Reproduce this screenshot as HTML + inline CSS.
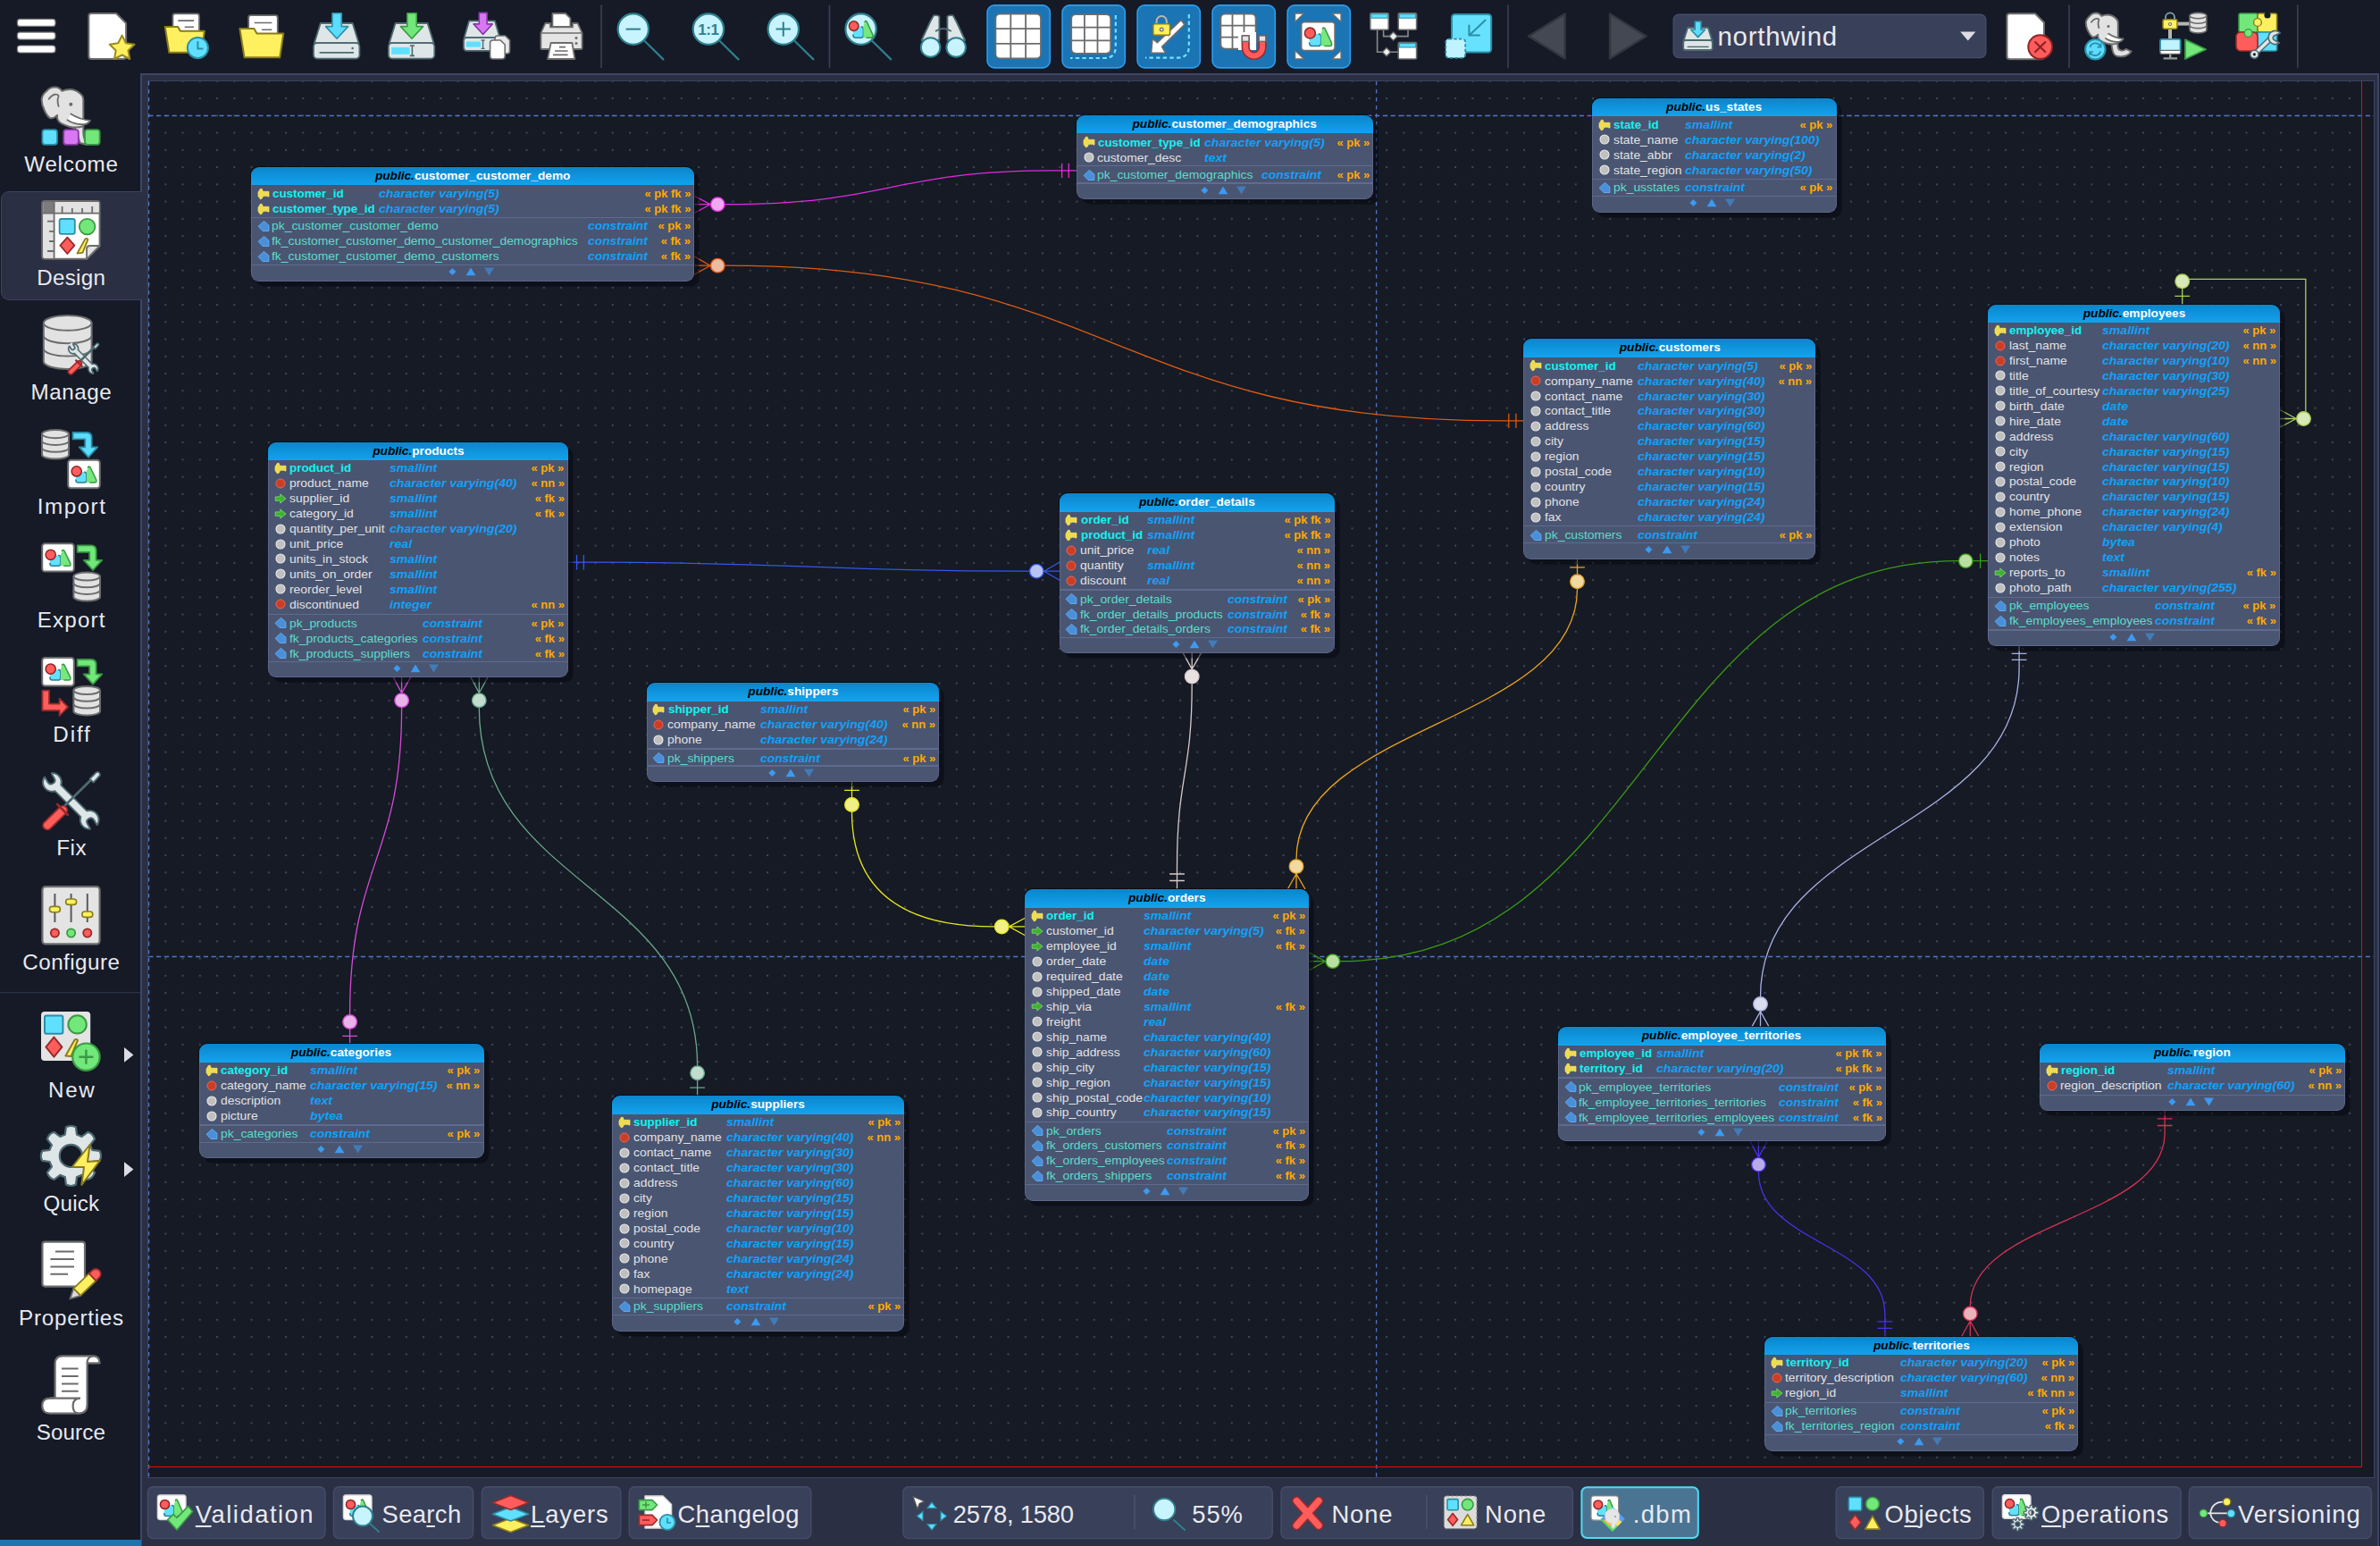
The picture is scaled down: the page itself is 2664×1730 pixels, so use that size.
<!DOCTYPE html>
<html><head><meta charset="utf-8"><title>pgModeler - northwind</title>
<style>
html,body{margin:0;padding:0}
body{width:2664px;height:1730px;overflow:hidden;background:#151a26;position:relative;font-family:"Liberation Sans",sans-serif}
#panel{position:absolute;left:157px;top:82px;width:2506px;height:1660px;background:#2a2f43;border:2px solid #3e4664;box-sizing:border-box}
#cvb{position:absolute;left:165px;top:89.6px;width:2493.2px;height:1564.4px;background:#3b4361}
#cv{position:absolute;left:166.3px;top:90.9px;width:2490.6px;height:1561.8px;background:#151a25;overflow:hidden}
#cvi{position:absolute;left:-166.3px;top:-90.9px;width:2664px;height:1730px}
#cvi svg.full{position:absolute;left:0;top:0}

.tb{position:absolute;border-radius:9px;box-shadow:5.5px 5.5px 0 rgba(8,10,16,.55);font-family:"Liberation Sans",sans-serif;white-space:nowrap}
.tt{position:absolute;left:0;top:0;right:0;height:21.2px;border-radius:9px 9px 0 0;box-shadow:0 -0.5px 0 0.6px rgba(6,8,14,.75);background:linear-gradient(#0b85cb,#13a4ef);color:#fff;font-weight:bold;font-size:12.4px;line-height:21px;text-align:center}
.tt span{display:inline-block;transform:scaleX(1.102)}
.tt i{color:#000}
.bd{position:absolute;left:0;right:0;background:#4a5572;border:1px solid #5b6789;border-top:none;border-radius:0 0 9px 9px;box-sizing:border-box}
.sp{position:absolute;left:0;right:0;height:1.3px;background:#5f6b8e}
.r{position:absolute;left:0;right:0;height:16.95px;line-height:16.95px;font-size:12.1px;color:#e2e2e2}
.r .ic{position:absolute;left:6.8px;top:1.5px;width:14px;height:14px}
.r .n{position:absolute;left:23.5px;top:.8px;transform:scaleX(1.148);transform-origin:0 50%}
.pkr .n{color:#0ff4f0;font-weight:bold;left:23.9px;transform:scaleX(1.107)}
.er .n{color:#5cdcca}
.r .t{position:absolute;top:.8px;color:#10a2fa;font-style:italic;font-weight:bold;transform:scaleX(1.165);transform-origin:0 50%}
.er .t{transform:scaleX(1.145)}
.r .g{position:absolute;right:4.2px;top:.8px;color:#ffaa00;font-weight:bold;transform:scaleX(1.074);transform-origin:100% 50%}
.fg{position:absolute}

#side{position:absolute;left:0;top:0}
.lb{position:absolute;white-space:nowrap;line-height:1.15;font-family:"Liberation Sans",sans-serif}
.lb u{text-decoration:underline;text-decoration-thickness:2px;text-underline-offset:3px}
#sel{position:absolute;left:.6px;top:213.7px;width:158.7px;height:122px;box-sizing:border-box;border:1.6px solid #3b4361;border-right:none;border-radius:9px 0 0 9px;background:#2a2f43}
#strip{position:absolute;left:0;top:1723.2px;width:158px;height:7px;background:#1b74b4}
</style></head><body>
<div id="panel"></div>
<div id="cvb"></div><div id="cv"><div id="cvi">
<svg class="full" width="2664" height="1730"><defs><pattern id="dp" x="165.05" y="89.85" width="19.25" height="19.25" patternUnits="userSpaceOnUse"><rect x="0" y="0" width="2" height="2" fill="#414657"/></pattern></defs>
<rect x="160" y="85" width="2483" height="1556" fill="url(#dp)"/>
<g stroke="#5473c6" stroke-width="1.3" fill="none" stroke-dasharray="5.2 3.6">
<path d="M166.2 129.5 H2657"/><path d="M166.2 1070.5 H2657"/></g>
<g stroke="#5473c6" stroke-width="1.3" fill="none" stroke-dasharray="4.5 4.5">
<path d="M166.6 91 V1653"/><path d="M1540.6 91 V1653"/></g>
<path d="M166.2 1641.5 H2643.5 V91" stroke="#ff0000" stroke-width="1.05" fill="none"/>
</svg>
<svg class="full" width="2664" height="1730"><g stroke="#e42ae4" fill="none" stroke-width="1.3" stroke-linecap="butt"><path d="M795.1 228.7 L777.5 219.5 M795.1 228.7 L777.5 228.7 M795.1 228.7 L777.5 238.2 M811.5 228.7 C996.0 228.7 996.0 190.9 1180.5 190.9 M1180.5 190.9 L1205.5 190.9 M1188.6 182.7 L1188.6 199.1 M1196.3 182.7 L1196.3 199.1"/><circle cx="803.3" cy="228.7" r="7.799999999999999" fill="#eeaaee" stroke-width="1.35"/></g>
<g stroke="#de5a12" fill="none" stroke-width="1.3" stroke-linecap="butt"><path d="M795.1 297.2 L777.5 287.1 M795.1 297.2 L777.5 297.2 M795.1 297.2 L777.5 307.0 M811.5 297.2 C1246.2 297.2 1246.2 470.9 1681.0 470.9 M1681.0 470.9 L1706.0 470.9 M1688.8 462.7 L1688.8 479.1 M1696.9 462.7 L1696.9 479.1"/><circle cx="803.3" cy="297.2" r="7.799999999999999" fill="#efb9a2" stroke-width="1.35"/></g>
<g stroke="#3358ee" fill="none" stroke-width="1.3" stroke-linecap="butt"><path d="M636.5 629.2 L661.5 629.2 M661.5 629.2 C906.8 629.2 906.8 639.2 1152.1 639.2 M645.6 621.0 L645.6 637.4 M653.4 621.0 L653.4 637.4 M1168.5 639.2 L1186.2 629.0 M1168.5 639.2 L1186.2 639.2 M1168.5 639.2 L1186.2 649.2"/><circle cx="1160.3" cy="639.2" r="7.799999999999999" fill="#b9c2f2" stroke-width="1.35"/></g>
<g stroke="#d84ad8" fill="none" stroke-width="1.3" stroke-linecap="butt"><path d="M449.6 775.5 L440.3 757.9 M449.6 775.5 L449.6 757.9 M449.6 775.5 L459.7 757.9 M449.6 791.9 C449.6 963.6 391.6 963.6 391.6 1135.3 M391.6 1151.7 L391.6 1168.4 M383.2 1159.3 L400.0 1159.3"/><circle cx="449.6" cy="783.7" r="7.799999999999999" fill="#e9b2e9" stroke-width="1.35"/><circle cx="391.6" cy="1143.5" r="7.799999999999999" fill="#e9b2e9" stroke-width="1.35"/></g>
<g stroke="#6aa98a" fill="none" stroke-width="1.3" stroke-linecap="butt"><path d="M536.3 775.5 L527.0 757.9 M536.3 775.5 L536.3 757.9 M536.3 775.5 L546.0 757.9 M536.3 791.9 C536.3 992.2 780.6 992.2 780.6 1192.5 M780.6 1208.9 L780.6 1226.0 M772.2 1217.1 L789.0 1217.1"/><circle cx="536.3" cy="783.7" r="7.799999999999999" fill="#c2ddd0" stroke-width="1.35"/><circle cx="780.6" cy="1200.7" r="7.799999999999999" fill="#c2ddd0" stroke-width="1.35"/></g>
<g stroke="#e6e620" fill="none" stroke-width="1.3" stroke-linecap="butt"><path d="M953.5 875.3 L953.5 892.2 M945.1 884.4 L961.9 884.4 M953.5 908.6 Q953.5 1036.9 1113.1 1036.9 M1129.5 1036.9 L1147.4 1027.2 M1129.5 1036.9 L1147.4 1036.9 M1129.5 1036.9 L1147.4 1046.8"/><circle cx="953.5" cy="900.4" r="7.799999999999999" fill="#f0f084" stroke-width="1.35"/><circle cx="1121.3" cy="1036.9" r="7.799999999999999" fill="#f0f084" stroke-width="1.35"/></g>
<g stroke="#d9caca" fill="none" stroke-width="1.3" stroke-linecap="butt"><path d="M1334.2 748.9 L1324.3 730.9 M1334.2 748.9 L1334.2 730.9 M1334.2 748.9 L1344.4 730.9 M1334.2 765.3 C1334.2 867.6 1317.5 867.6 1317.5 970.0 M1317.5 970.0 L1317.5 995.0 M1309.1 978.0 L1325.9 978.0 M1309.1 985.5 L1325.9 985.5"/><circle cx="1334.2" cy="757.1" r="7.799999999999999" fill="#e9e1e1" stroke-width="1.35"/></g>
<g stroke="#e8a220" fill="none" stroke-width="1.3" stroke-linecap="butt"><path d="M1765.5 625.5 L1765.5 642.6 M1757.1 634.9 L1773.9 634.9 M1765.5 659.0 C1765.5 810.2 1451.0 810.2 1451.0 961.4 M1451.0 977.8 L1441.3 995.0 M1451.0 977.8 L1451.0 995.0 M1451.0 977.8 L1461.0 995.0"/><circle cx="1765.5" cy="650.8" r="7.799999999999999" fill="#f1d9a2" stroke-width="1.35"/><circle cx="1451.0" cy="969.6" r="7.799999999999999" fill="#f1d9a2" stroke-width="1.35"/></g>
<g stroke="#3b9b12" fill="none" stroke-width="1.3" stroke-linecap="butt"><path d="M2225.6 627.7 L2208.5 627.7 M2216.6 619.5 L2216.6 635.9 M2192.1 627.7 C1846.0 627.7 1846.0 1075.7 1500.0 1075.7 M1483.6 1075.7 L1465.7 1066.1 M1483.6 1075.7 L1465.7 1075.7 M1483.6 1075.7 L1465.7 1085.5"/><circle cx="2200.3" cy="627.7" r="7.799999999999999" fill="#b9e0a2" stroke-width="1.35"/><circle cx="1491.8" cy="1075.7" r="7.799999999999999" fill="#b9e0a2" stroke-width="1.35"/></g>
<g stroke="#a9d052" fill="none" stroke-width="1.3" stroke-linecap="butt"><path d="M2442.7 323.0 L2442.7 341.3 M2434.3 331.3 L2451.1 331.3 M2450 312.3 L2580.8 312.3 L2580.8 460.5 M2570.3 468.5 L2552.3 458.8 M2570.3 468.5 L2552.3 468.5 M2570.3 468.5 L2552.3 478.0"/><circle cx="2442.7" cy="314.8" r="7.799999999999999" fill="#d9e8ba" stroke-width="1.35"/><circle cx="2578.5" cy="468.5" r="7.799999999999999" fill="#d9e8ba" stroke-width="1.35"/></g>
<g stroke="#aab2e2" fill="none" stroke-width="1.3" stroke-linecap="butt"><path d="M2260.1 722.6 L2260.1 747.6 M2260.1 747.6 C2260.1 931.5 1970.5 931.5 1970.5 1115.3 M2251.7 731.4 L2268.5 731.4 M2251.7 738.4 L2268.5 738.4 M1970.5 1131.7 L1960.8 1149.1 M1970.5 1131.7 L1970.5 1149.1 M1970.5 1131.7 L1980.2 1149.1"/><circle cx="1970.5" cy="1123.5" r="7.799999999999999" fill="#d9ddee" stroke-width="1.35"/></g>
<g stroke="#4a30e8" fill="none" stroke-width="1.3" stroke-linecap="butt"><path d="M1968.4 1295.1 L1959.0 1277.0 M1968.4 1295.1 L1968.4 1277.0 M1968.4 1295.1 L1978.1 1277.0 M1968.4 1311.5 C1968.4 1391.2 2109.9 1391.2 2109.9 1470.8 M2109.9 1470.8 L2109.9 1495.8 M2101.5 1478.8 L2118.3 1478.8 M2101.5 1486.4 L2118.3 1486.4"/><circle cx="1968.4" cy="1303.2" r="7.799999999999999" fill="#b9aaea" stroke-width="1.35"/></g>
<g stroke="#d83252" fill="none" stroke-width="1.3" stroke-linecap="butt"><path d="M2423.1 1242.7 L2423.1 1267.7 M2423.1 1267.7 C2423.1 1364.8 2205.3 1364.8 2205.3 1461.8 M2414.7 1251.9 L2431.5 1251.9 M2414.7 1259.5 L2431.5 1259.5 M2205.3 1478.2 L2195.5 1495.8 M2205.3 1478.2 L2205.3 1495.8 M2205.3 1478.2 L2215.0 1495.8"/><circle cx="2205.3" cy="1470.0" r="7.799999999999999" fill="#eab2ba" stroke-width="1.35"/></g></svg>
<div class="tb" style="left:280.95px;top:186.50px;width:496.40px;height:128.10px">
<div class="tt"><span><i>public.</i>customer_customer_demo</span></div>
<div class="bd" style="top:20.6px;height:107.50px"></div>
<div class="sp" style="top:56.32px"></div>
<div class="sp" style="top:109.40px"></div>
<div class="r pkr" style="top:21.60px"><svg class="ic" viewBox="0 0 14 14"><path d="M1 5.2 L3.4 1.3 L5.2 1.3 L6.3 4.3 L13 4.3 L13 10 L11.5 10 L10.7 8.7 L9.7 9.9 L8.7 8.7 L7.7 9.9 L6.5 8.9 L5.4 12 L3.4 12.9 L1 9.4 Z" fill="#eedb50" stroke="#fbeb66" stroke-width=".7" stroke-linejoin="round"/></svg><span class="n">customer_id</span><span class="t" style="left:143.3px">character varying(5)</span><span class="g">« pk fk »</span></div>
<div class="r pkr" style="top:38.56px"><svg class="ic" viewBox="0 0 14 14"><path d="M1 5.2 L3.4 1.3 L5.2 1.3 L6.3 4.3 L13 4.3 L13 10 L11.5 10 L10.7 8.7 L9.7 9.9 L8.7 8.7 L7.7 9.9 L6.5 8.9 L5.4 12 L3.4 12.9 L1 9.4 Z" fill="#eedb50" stroke="#fbeb66" stroke-width=".7" stroke-linejoin="round"/></svg><span class="n">customer_type_id</span><span class="t" style="left:143.3px">character varying(5)</span><span class="g">« pk fk »</span></div>
<div class="r er" style="top:57.92px"><svg class="ic" viewBox="0 0 14 14"><path d="M1.1 7.3 L7.4 1.4 L12.9 6.1 L12.9 12.5 L6 12.5 Z" fill="#4a90d8" stroke="#62b0ff" stroke-width=".9" stroke-linejoin="round"/></svg><span class="n">pk_customer_customer_demo</span><span class="t" style="left:377.0px">constraint</span><span class="g">« pk »</span></div>
<div class="r er" style="top:74.88px"><svg class="ic" viewBox="0 0 14 14"><path d="M1.1 7.3 L7.4 1.4 L12.9 6.1 L12.9 12.5 L6 12.5 Z" fill="#4a90d8" stroke="#62b0ff" stroke-width=".9" stroke-linejoin="round"/></svg><span class="n">fk_customer_customer_demo_customer_demographics</span><span class="t" style="left:377.0px">constraint</span><span class="g">« fk »</span></div>
<div class="r er" style="top:91.84px"><svg class="ic" viewBox="0 0 14 14"><path d="M1.1 7.3 L7.4 1.4 L12.9 6.1 L12.9 12.5 L6 12.5 Z" fill="#4a90d8" stroke="#62b0ff" stroke-width=".9" stroke-linejoin="round"/></svg><span class="n">fk_customer_customer_demo_customers</span><span class="t" style="left:377.0px">constraint</span><span class="g">« fk »</span></div>
<svg class="fg" style="left:213.60px;top:109.70px" width="64" height="16" viewBox="-32 -8 64 16"><path d="M-20.6 -4 L-16.6 0 L-20.6 4 L-24.6 0 Z" fill="#3c9af0"/><path d="M-5.4 4.2 L0 -4.6 L5.4 4.2 Z" fill="#3c9af0"/><path d="M15 -4.4 L26 -4.4 L20.5 4.4 Z" fill="#3c9af0" opacity=".55"/></svg>
</div>
<div class="tb" style="left:1204.95px;top:128.75px;width:332.40px;height:94.18px">
<div class="tt"><span><i>public.</i>customer_demographics</span></div>
<div class="bd" style="top:20.6px;height:73.58px"></div>
<div class="sp" style="top:56.32px"></div>
<div class="sp" style="top:75.48px"></div>
<div class="r pkr" style="top:22.20px"><svg class="ic" viewBox="0 0 14 14"><path d="M1 5.2 L3.4 1.3 L5.2 1.3 L6.3 4.3 L13 4.3 L13 10 L11.5 10 L10.7 8.7 L9.7 9.9 L8.7 8.7 L7.7 9.9 L6.5 8.9 L5.4 12 L3.4 12.9 L1 9.4 Z" fill="#eedb50" stroke="#fbeb66" stroke-width=".7" stroke-linejoin="round"/></svg><span class="n">customer_type_id</span><span class="t" style="left:143.2px">character varying(5)</span><span class="g">« pk »</span></div>
<div class="r" style="top:39.16px"><svg class="ic" viewBox="0 0 14 14"><circle cx="7" cy="7" r="5" fill="#c0c0c0" stroke="#ececec" stroke-width="1.1"/></svg><span class="n">customer_desc</span><span class="t" style="left:143.2px">text</span></div>
<div class="r er" style="top:58.42px"><svg class="ic" viewBox="0 0 14 14"><path d="M1.1 7.3 L7.4 1.4 L12.9 6.1 L12.9 12.5 L6 12.5 Z" fill="#4a90d8" stroke="#62b0ff" stroke-width=".9" stroke-linejoin="round"/></svg><span class="n">pk_customer_demographics</span><span class="t" style="left:206.9px">constraint</span><span class="g">« pk »</span></div>
<svg class="fg" style="left:131.60px;top:75.78px" width="64" height="16" viewBox="-32 -8 64 16"><path d="M-20.6 -4 L-16.6 0 L-20.6 4 L-24.6 0 Z" fill="#3c9af0"/><path d="M-5.4 4.2 L0 -4.6 L5.4 4.2 Z" fill="#3c9af0"/><path d="M15 -4.4 L26 -4.4 L20.5 4.4 Z" fill="#3c9af0" opacity=".55"/></svg>
</div>
<div class="tb" style="left:1782.45px;top:109.50px;width:273.20px;height:128.10px">
<div class="tt"><span><i>public.</i>us_states</span></div>
<div class="bd" style="top:20.6px;height:107.50px"></div>
<div class="sp" style="top:90.24px"></div>
<div class="sp" style="top:109.40px"></div>
<div class="r pkr" style="top:21.50px"><svg class="ic" viewBox="0 0 14 14"><path d="M1 5.2 L3.4 1.3 L5.2 1.3 L6.3 4.3 L13 4.3 L13 10 L11.5 10 L10.7 8.7 L9.7 9.9 L8.7 8.7 L7.7 9.9 L6.5 8.9 L5.4 12 L3.4 12.9 L1 9.4 Z" fill="#eedb50" stroke="#fbeb66" stroke-width=".7" stroke-linejoin="round"/></svg><span class="n">state_id</span><span class="t" style="left:103.7px">smallint</span><span class="g">« pk »</span></div>
<div class="r" style="top:38.46px"><svg class="ic" viewBox="0 0 14 14"><circle cx="7" cy="7" r="5" fill="#c0c0c0" stroke="#ececec" stroke-width="1.1"/></svg><span class="n">state_name</span><span class="t" style="left:103.7px">character varying(100)</span></div>
<div class="r" style="top:55.42px"><svg class="ic" viewBox="0 0 14 14"><circle cx="7" cy="7" r="5" fill="#c0c0c0" stroke="#ececec" stroke-width="1.1"/></svg><span class="n">state_abbr</span><span class="t" style="left:103.7px">character varying(2)</span></div>
<div class="r" style="top:72.38px"><svg class="ic" viewBox="0 0 14 14"><circle cx="7" cy="7" r="5" fill="#c0c0c0" stroke="#ececec" stroke-width="1.1"/></svg><span class="n">state_region</span><span class="t" style="left:103.7px">character varying(50)</span></div>
<div class="r er" style="top:92.14px"><svg class="ic" viewBox="0 0 14 14"><path d="M1.1 7.3 L7.4 1.4 L12.9 6.1 L12.9 12.5 L6 12.5 Z" fill="#4a90d8" stroke="#62b0ff" stroke-width=".9" stroke-linejoin="round"/></svg><span class="n">pk_usstates</span><span class="t" style="left:103.7px">constraint</span><span class="g">« pk »</span></div>
<svg class="fg" style="left:102.00px;top:109.70px" width="64" height="16" viewBox="-32 -8 64 16"><path d="M-20.6 -4 L-16.6 0 L-20.6 4 L-24.6 0 Z" fill="#3c9af0"/><path d="M-5.4 4.2 L0 -4.6 L5.4 4.2 Z" fill="#3c9af0"/><path d="M15 -4.4 L26 -4.4 L20.5 4.4 Z" fill="#3c9af0" opacity=".55"/></svg>
</div>
<div class="tb" style="left:2225.20px;top:340.50px;width:326.70px;height:382.50px">
<div class="tt"><span><i>public.</i>employees</span></div>
<div class="bd" style="top:20.6px;height:361.90px"></div>
<div class="sp" style="top:327.68px"></div>
<div class="sp" style="top:363.80px"></div>
<div class="r pkr" style="top:20.60px"><svg class="ic" viewBox="0 0 14 14"><path d="M1 5.2 L3.4 1.3 L5.2 1.3 L6.3 4.3 L13 4.3 L13 10 L11.5 10 L10.7 8.7 L9.7 9.9 L8.7 8.7 L7.7 9.9 L6.5 8.9 L5.4 12 L3.4 12.9 L1 9.4 Z" fill="#eedb50" stroke="#fbeb66" stroke-width=".7" stroke-linejoin="round"/></svg><span class="n">employee_id</span><span class="t" style="left:128.1px">smallint</span><span class="g">« pk »</span></div>
<div class="r" style="top:37.56px"><svg class="ic" viewBox="0 0 14 14"><circle cx="7" cy="7" r="5" fill="#cc3e24" stroke="#e8685a" stroke-width="1"/></svg><span class="n">last_name</span><span class="t" style="left:128.1px">character varying(20)</span><span class="g">« nn »</span></div>
<div class="r" style="top:54.52px"><svg class="ic" viewBox="0 0 14 14"><circle cx="7" cy="7" r="5" fill="#cc3e24" stroke="#e8685a" stroke-width="1"/></svg><span class="n">first_name</span><span class="t" style="left:128.1px">character varying(10)</span><span class="g">« nn »</span></div>
<div class="r" style="top:71.48px"><svg class="ic" viewBox="0 0 14 14"><circle cx="7" cy="7" r="5" fill="#c0c0c0" stroke="#ececec" stroke-width="1.1"/></svg><span class="n">title</span><span class="t" style="left:128.1px">character varying(30)</span></div>
<div class="r" style="top:88.44px"><svg class="ic" viewBox="0 0 14 14"><circle cx="7" cy="7" r="5" fill="#c0c0c0" stroke="#ececec" stroke-width="1.1"/></svg><span class="n">title_of_courtesy</span><span class="t" style="left:128.1px">character varying(25)</span></div>
<div class="r" style="top:105.40px"><svg class="ic" viewBox="0 0 14 14"><circle cx="7" cy="7" r="5" fill="#c0c0c0" stroke="#ececec" stroke-width="1.1"/></svg><span class="n">birth_date</span><span class="t" style="left:128.1px">date</span></div>
<div class="r" style="top:122.36px"><svg class="ic" viewBox="0 0 14 14"><circle cx="7" cy="7" r="5" fill="#c0c0c0" stroke="#ececec" stroke-width="1.1"/></svg><span class="n">hire_date</span><span class="t" style="left:128.1px">date</span></div>
<div class="r" style="top:139.32px"><svg class="ic" viewBox="0 0 14 14"><circle cx="7" cy="7" r="5" fill="#c0c0c0" stroke="#ececec" stroke-width="1.1"/></svg><span class="n">address</span><span class="t" style="left:128.1px">character varying(60)</span></div>
<div class="r" style="top:156.28px"><svg class="ic" viewBox="0 0 14 14"><circle cx="7" cy="7" r="5" fill="#c0c0c0" stroke="#ececec" stroke-width="1.1"/></svg><span class="n">city</span><span class="t" style="left:128.1px">character varying(15)</span></div>
<div class="r" style="top:173.24px"><svg class="ic" viewBox="0 0 14 14"><circle cx="7" cy="7" r="5" fill="#c0c0c0" stroke="#ececec" stroke-width="1.1"/></svg><span class="n">region</span><span class="t" style="left:128.1px">character varying(15)</span></div>
<div class="r" style="top:190.20px"><svg class="ic" viewBox="0 0 14 14"><circle cx="7" cy="7" r="5" fill="#c0c0c0" stroke="#ececec" stroke-width="1.1"/></svg><span class="n">postal_code</span><span class="t" style="left:128.1px">character varying(10)</span></div>
<div class="r" style="top:207.16px"><svg class="ic" viewBox="0 0 14 14"><circle cx="7" cy="7" r="5" fill="#c0c0c0" stroke="#ececec" stroke-width="1.1"/></svg><span class="n">country</span><span class="t" style="left:128.1px">character varying(15)</span></div>
<div class="r" style="top:224.12px"><svg class="ic" viewBox="0 0 14 14"><circle cx="7" cy="7" r="5" fill="#c0c0c0" stroke="#ececec" stroke-width="1.1"/></svg><span class="n">home_phone</span><span class="t" style="left:128.1px">character varying(24)</span></div>
<div class="r" style="top:241.08px"><svg class="ic" viewBox="0 0 14 14"><circle cx="7" cy="7" r="5" fill="#c0c0c0" stroke="#ececec" stroke-width="1.1"/></svg><span class="n">extension</span><span class="t" style="left:128.1px">character varying(4)</span></div>
<div class="r" style="top:258.04px"><svg class="ic" viewBox="0 0 14 14"><circle cx="7" cy="7" r="5" fill="#c0c0c0" stroke="#ececec" stroke-width="1.1"/></svg><span class="n">photo</span><span class="t" style="left:128.1px">bytea</span></div>
<div class="r" style="top:275.00px"><svg class="ic" viewBox="0 0 14 14"><circle cx="7" cy="7" r="5" fill="#c0c0c0" stroke="#ececec" stroke-width="1.1"/></svg><span class="n">notes</span><span class="t" style="left:128.1px">text</span></div>
<div class="r" style="top:291.96px"><svg class="ic" viewBox="0 0 14 14"><path d="M1.2 4.9 L6.8 4.9 L6.8 1.9 L13 7 L6.8 12.1 L6.8 9.3 L1.2 9.3 Z" fill="#40b030" stroke="#7fe070" stroke-width=".8" stroke-linejoin="round"/></svg><span class="n">reports_to</span><span class="t" style="left:128.1px">smallint</span><span class="g">« fk »</span></div>
<div class="r" style="top:308.92px"><svg class="ic" viewBox="0 0 14 14"><circle cx="7" cy="7" r="5" fill="#c0c0c0" stroke="#ececec" stroke-width="1.1"/></svg><span class="n">photo_path</span><span class="t" style="left:128.1px">character varying(255)</span></div>
<div class="r er" style="top:328.78px"><svg class="ic" viewBox="0 0 14 14"><path d="M1.1 7.3 L7.4 1.4 L12.9 6.1 L12.9 12.5 L6 12.5 Z" fill="#4a90d8" stroke="#62b0ff" stroke-width=".9" stroke-linejoin="round"/></svg><span class="n">pk_employees</span><span class="t" style="left:187.3px">constraint</span><span class="g">« pk »</span></div>
<div class="r er" style="top:345.74px"><svg class="ic" viewBox="0 0 14 14"><path d="M1.1 7.3 L7.4 1.4 L12.9 6.1 L12.9 12.5 L6 12.5 Z" fill="#4a90d8" stroke="#62b0ff" stroke-width=".9" stroke-linejoin="round"/></svg><span class="n">fk_employees_employees</span><span class="t" style="left:187.3px">constraint</span><span class="g">« fk »</span></div>
<svg class="fg" style="left:128.75px;top:364.10px" width="64" height="16" viewBox="-32 -8 64 16"><path d="M-20.6 -4 L-16.6 0 L-20.6 4 L-24.6 0 Z" fill="#3c9af0"/><path d="M-5.4 4.2 L0 -4.6 L5.4 4.2 Z" fill="#3c9af0"/><path d="M15 -4.4 L26 -4.4 L20.5 4.4 Z" fill="#3c9af0" opacity=".55"/></svg>
</div>
<div class="tb" style="left:1705.45px;top:379.00px;width:327.00px;height:246.82px">
<div class="tt"><span><i>public.</i>customers</span></div>
<div class="bd" style="top:20.6px;height:226.22px"></div>
<div class="sp" style="top:208.96px"></div>
<div class="sp" style="top:228.12px"></div>
<div class="r pkr" style="top:21.80px"><svg class="ic" viewBox="0 0 14 14"><path d="M1 5.2 L3.4 1.3 L5.2 1.3 L6.3 4.3 L13 4.3 L13 10 L11.5 10 L10.7 8.7 L9.7 9.9 L8.7 8.7 L7.7 9.9 L6.5 8.9 L5.4 12 L3.4 12.9 L1 9.4 Z" fill="#eedb50" stroke="#fbeb66" stroke-width=".7" stroke-linejoin="round"/></svg><span class="n">customer_id</span><span class="t" style="left:127.7px">character varying(5)</span><span class="g">« pk »</span></div>
<div class="r" style="top:38.76px"><svg class="ic" viewBox="0 0 14 14"><circle cx="7" cy="7" r="5" fill="#cc3e24" stroke="#e8685a" stroke-width="1"/></svg><span class="n">company_name</span><span class="t" style="left:127.7px">character varying(40)</span><span class="g">« nn »</span></div>
<div class="r" style="top:55.72px"><svg class="ic" viewBox="0 0 14 14"><circle cx="7" cy="7" r="5" fill="#c0c0c0" stroke="#ececec" stroke-width="1.1"/></svg><span class="n">contact_name</span><span class="t" style="left:127.7px">character varying(30)</span></div>
<div class="r" style="top:72.68px"><svg class="ic" viewBox="0 0 14 14"><circle cx="7" cy="7" r="5" fill="#c0c0c0" stroke="#ececec" stroke-width="1.1"/></svg><span class="n">contact_title</span><span class="t" style="left:127.7px">character varying(30)</span></div>
<div class="r" style="top:89.64px"><svg class="ic" viewBox="0 0 14 14"><circle cx="7" cy="7" r="5" fill="#c0c0c0" stroke="#ececec" stroke-width="1.1"/></svg><span class="n">address</span><span class="t" style="left:127.7px">character varying(60)</span></div>
<div class="r" style="top:106.60px"><svg class="ic" viewBox="0 0 14 14"><circle cx="7" cy="7" r="5" fill="#c0c0c0" stroke="#ececec" stroke-width="1.1"/></svg><span class="n">city</span><span class="t" style="left:127.7px">character varying(15)</span></div>
<div class="r" style="top:123.56px"><svg class="ic" viewBox="0 0 14 14"><circle cx="7" cy="7" r="5" fill="#c0c0c0" stroke="#ececec" stroke-width="1.1"/></svg><span class="n">region</span><span class="t" style="left:127.7px">character varying(15)</span></div>
<div class="r" style="top:140.52px"><svg class="ic" viewBox="0 0 14 14"><circle cx="7" cy="7" r="5" fill="#c0c0c0" stroke="#ececec" stroke-width="1.1"/></svg><span class="n">postal_code</span><span class="t" style="left:127.7px">character varying(10)</span></div>
<div class="r" style="top:157.48px"><svg class="ic" viewBox="0 0 14 14"><circle cx="7" cy="7" r="5" fill="#c0c0c0" stroke="#ececec" stroke-width="1.1"/></svg><span class="n">country</span><span class="t" style="left:127.7px">character varying(15)</span></div>
<div class="r" style="top:174.44px"><svg class="ic" viewBox="0 0 14 14"><circle cx="7" cy="7" r="5" fill="#c0c0c0" stroke="#ececec" stroke-width="1.1"/></svg><span class="n">phone</span><span class="t" style="left:127.7px">character varying(24)</span></div>
<div class="r" style="top:191.40px"><svg class="ic" viewBox="0 0 14 14"><circle cx="7" cy="7" r="5" fill="#c0c0c0" stroke="#ececec" stroke-width="1.1"/></svg><span class="n">fax</span><span class="t" style="left:127.7px">character varying(24)</span></div>
<div class="r er" style="top:211.16px"><svg class="ic" viewBox="0 0 14 14"><path d="M1.1 7.3 L7.4 1.4 L12.9 6.1 L12.9 12.5 L6 12.5 Z" fill="#4a90d8" stroke="#62b0ff" stroke-width=".9" stroke-linejoin="round"/></svg><span class="n">pk_customers</span><span class="t" style="left:127.7px">constraint</span><span class="g">« pk »</span></div>
<svg class="fg" style="left:128.90px;top:228.42px" width="64" height="16" viewBox="-32 -8 64 16"><path d="M-20.6 -4 L-16.6 0 L-20.6 4 L-24.6 0 Z" fill="#3c9af0"/><path d="M-5.4 4.2 L0 -4.6 L5.4 4.2 Z" fill="#3c9af0"/><path d="M15 -4.4 L26 -4.4 L20.5 4.4 Z" fill="#3c9af0" opacity=".55"/></svg>
</div>
<div class="tb" style="left:300.20px;top:494.50px;width:335.70px;height:263.78px">
<div class="tt"><span><i>public.</i>products</span></div>
<div class="bd" style="top:20.6px;height:243.18px"></div>
<div class="sp" style="top:192.00px"></div>
<div class="sp" style="top:245.08px"></div>
<div class="r pkr" style="top:20.70px"><svg class="ic" viewBox="0 0 14 14"><path d="M1 5.2 L3.4 1.3 L5.2 1.3 L6.3 4.3 L13 4.3 L13 10 L11.5 10 L10.7 8.7 L9.7 9.9 L8.7 8.7 L7.7 9.9 L6.5 8.9 L5.4 12 L3.4 12.9 L1 9.4 Z" fill="#eedb50" stroke="#fbeb66" stroke-width=".7" stroke-linejoin="round"/></svg><span class="n">product_id</span><span class="t" style="left:136.0px">smallint</span><span class="g">« pk »</span></div>
<div class="r" style="top:37.66px"><svg class="ic" viewBox="0 0 14 14"><circle cx="7" cy="7" r="5" fill="#cc3e24" stroke="#e8685a" stroke-width="1"/></svg><span class="n">product_name</span><span class="t" style="left:136.0px">character varying(40)</span><span class="g">« nn »</span></div>
<div class="r" style="top:54.62px"><svg class="ic" viewBox="0 0 14 14"><path d="M1.2 4.9 L6.8 4.9 L6.8 1.9 L13 7 L6.8 12.1 L6.8 9.3 L1.2 9.3 Z" fill="#40b030" stroke="#7fe070" stroke-width=".8" stroke-linejoin="round"/></svg><span class="n">supplier_id</span><span class="t" style="left:136.0px">smallint</span><span class="g">« fk »</span></div>
<div class="r" style="top:71.58px"><svg class="ic" viewBox="0 0 14 14"><path d="M1.2 4.9 L6.8 4.9 L6.8 1.9 L13 7 L6.8 12.1 L6.8 9.3 L1.2 9.3 Z" fill="#40b030" stroke="#7fe070" stroke-width=".8" stroke-linejoin="round"/></svg><span class="n">category_id</span><span class="t" style="left:136.0px">smallint</span><span class="g">« fk »</span></div>
<div class="r" style="top:88.54px"><svg class="ic" viewBox="0 0 14 14"><circle cx="7" cy="7" r="5" fill="#c0c0c0" stroke="#ececec" stroke-width="1.1"/></svg><span class="n">quantity_per_unit</span><span class="t" style="left:136.0px">character varying(20)</span></div>
<div class="r" style="top:105.50px"><svg class="ic" viewBox="0 0 14 14"><circle cx="7" cy="7" r="5" fill="#c0c0c0" stroke="#ececec" stroke-width="1.1"/></svg><span class="n">unit_price</span><span class="t" style="left:136.0px">real</span></div>
<div class="r" style="top:122.46px"><svg class="ic" viewBox="0 0 14 14"><circle cx="7" cy="7" r="5" fill="#c0c0c0" stroke="#ececec" stroke-width="1.1"/></svg><span class="n">units_in_stock</span><span class="t" style="left:136.0px">smallint</span></div>
<div class="r" style="top:139.42px"><svg class="ic" viewBox="0 0 14 14"><circle cx="7" cy="7" r="5" fill="#c0c0c0" stroke="#ececec" stroke-width="1.1"/></svg><span class="n">units_on_order</span><span class="t" style="left:136.0px">smallint</span></div>
<div class="r" style="top:156.38px"><svg class="ic" viewBox="0 0 14 14"><circle cx="7" cy="7" r="5" fill="#c0c0c0" stroke="#ececec" stroke-width="1.1"/></svg><span class="n">reorder_level</span><span class="t" style="left:136.0px">smallint</span></div>
<div class="r" style="top:173.34px"><svg class="ic" viewBox="0 0 14 14"><circle cx="7" cy="7" r="5" fill="#cc3e24" stroke="#e8685a" stroke-width="1"/></svg><span class="n">discontinued</span><span class="t" style="left:136.0px">integer</span><span class="g">« nn »</span></div>
<div class="r er" style="top:194.40px"><svg class="ic" viewBox="0 0 14 14"><path d="M1.1 7.3 L7.4 1.4 L12.9 6.1 L12.9 12.5 L6 12.5 Z" fill="#4a90d8" stroke="#62b0ff" stroke-width=".9" stroke-linejoin="round"/></svg><span class="n">pk_products</span><span class="t" style="left:172.7px">constraint</span><span class="g">« pk »</span></div>
<div class="r er" style="top:211.36px"><svg class="ic" viewBox="0 0 14 14"><path d="M1.1 7.3 L7.4 1.4 L12.9 6.1 L12.9 12.5 L6 12.5 Z" fill="#4a90d8" stroke="#62b0ff" stroke-width=".9" stroke-linejoin="round"/></svg><span class="n">fk_products_categories</span><span class="t" style="left:172.7px">constraint</span><span class="g">« fk »</span></div>
<div class="r er" style="top:228.32px"><svg class="ic" viewBox="0 0 14 14"><path d="M1.1 7.3 L7.4 1.4 L12.9 6.1 L12.9 12.5 L6 12.5 Z" fill="#4a90d8" stroke="#62b0ff" stroke-width=".9" stroke-linejoin="round"/></svg><span class="n">fk_products_suppliers</span><span class="t" style="left:172.7px">constraint</span><span class="g">« fk »</span></div>
<svg class="fg" style="left:133.25px;top:245.38px" width="64" height="16" viewBox="-32 -8 64 16"><path d="M-20.6 -4 L-16.6 0 L-20.6 4 L-24.6 0 Z" fill="#3c9af0"/><path d="M-5.4 4.2 L0 -4.6 L5.4 4.2 Z" fill="#3c9af0"/><path d="M15 -4.4 L26 -4.4 L20.5 4.4 Z" fill="#3c9af0" opacity=".55"/></svg>
</div>
<div class="tb" style="left:1185.70px;top:552.25px;width:307.90px;height:178.98px">
<div class="tt"><span><i>public.</i>order_details</span></div>
<div class="bd" style="top:20.6px;height:158.38px"></div>
<div class="sp" style="top:107.20px"></div>
<div class="sp" style="top:160.28px"></div>
<div class="r pkr" style="top:21.20px"><svg class="ic" viewBox="0 0 14 14"><path d="M1 5.2 L3.4 1.3 L5.2 1.3 L6.3 4.3 L13 4.3 L13 10 L11.5 10 L10.7 8.7 L9.7 9.9 L8.7 8.7 L7.7 9.9 L6.5 8.9 L5.4 12 L3.4 12.9 L1 9.4 Z" fill="#eedb50" stroke="#fbeb66" stroke-width=".7" stroke-linejoin="round"/></svg><span class="n">order_id</span><span class="t" style="left:98.2px">smallint</span><span class="g">« pk fk »</span></div>
<div class="r pkr" style="top:38.16px"><svg class="ic" viewBox="0 0 14 14"><path d="M1 5.2 L3.4 1.3 L5.2 1.3 L6.3 4.3 L13 4.3 L13 10 L11.5 10 L10.7 8.7 L9.7 9.9 L8.7 8.7 L7.7 9.9 L6.5 8.9 L5.4 12 L3.4 12.9 L1 9.4 Z" fill="#eedb50" stroke="#fbeb66" stroke-width=".7" stroke-linejoin="round"/></svg><span class="n">product_id</span><span class="t" style="left:98.2px">smallint</span><span class="g">« pk fk »</span></div>
<div class="r" style="top:55.12px"><svg class="ic" viewBox="0 0 14 14"><circle cx="7" cy="7" r="5" fill="#cc3e24" stroke="#e8685a" stroke-width="1"/></svg><span class="n">unit_price</span><span class="t" style="left:98.2px">real</span><span class="g">« nn »</span></div>
<div class="r" style="top:72.08px"><svg class="ic" viewBox="0 0 14 14"><circle cx="7" cy="7" r="5" fill="#cc3e24" stroke="#e8685a" stroke-width="1"/></svg><span class="n">quantity</span><span class="t" style="left:98.2px">smallint</span><span class="g">« nn »</span></div>
<div class="r" style="top:89.04px"><svg class="ic" viewBox="0 0 14 14"><circle cx="7" cy="7" r="5" fill="#cc3e24" stroke="#e8685a" stroke-width="1"/></svg><span class="n">discount</span><span class="t" style="left:98.2px">real</span><span class="g">« nn »</span></div>
<div class="r er" style="top:109.50px"><svg class="ic" viewBox="0 0 14 14"><path d="M1.1 7.3 L7.4 1.4 L12.9 6.1 L12.9 12.5 L6 12.5 Z" fill="#4a90d8" stroke="#62b0ff" stroke-width=".9" stroke-linejoin="round"/></svg><span class="n">pk_order_details</span><span class="t" style="left:188.3px">constraint</span><span class="g">« pk »</span></div>
<div class="r er" style="top:126.46px"><svg class="ic" viewBox="0 0 14 14"><path d="M1.1 7.3 L7.4 1.4 L12.9 6.1 L12.9 12.5 L6 12.5 Z" fill="#4a90d8" stroke="#62b0ff" stroke-width=".9" stroke-linejoin="round"/></svg><span class="n">fk_order_details_products</span><span class="t" style="left:188.3px">constraint</span><span class="g">« fk »</span></div>
<div class="r er" style="top:143.42px"><svg class="ic" viewBox="0 0 14 14"><path d="M1.1 7.3 L7.4 1.4 L12.9 6.1 L12.9 12.5 L6 12.5 Z" fill="#4a90d8" stroke="#62b0ff" stroke-width=".9" stroke-linejoin="round"/></svg><span class="n">fk_order_details_orders</span><span class="t" style="left:188.3px">constraint</span><span class="g">« fk »</span></div>
<svg class="fg" style="left:119.35px;top:160.58px" width="64" height="16" viewBox="-32 -8 64 16"><path d="M-20.6 -4 L-16.6 0 L-20.6 4 L-24.6 0 Z" fill="#3c9af0"/><path d="M-5.4 4.2 L0 -4.6 L5.4 4.2 Z" fill="#3c9af0"/><path d="M15 -4.4 L26 -4.4 L20.5 4.4 Z" fill="#3c9af0" opacity=".55"/></svg>
</div>
<div class="tb" style="left:723.70px;top:764.00px;width:327.30px;height:111.14px">
<div class="tt"><span><i>public.</i>shippers</span></div>
<div class="bd" style="top:20.6px;height:90.54px"></div>
<div class="sp" style="top:73.28px"></div>
<div class="sp" style="top:92.44px"></div>
<div class="r pkr" style="top:21.70px"><svg class="ic" viewBox="0 0 14 14"><path d="M1 5.2 L3.4 1.3 L5.2 1.3 L6.3 4.3 L13 4.3 L13 10 L11.5 10 L10.7 8.7 L9.7 9.9 L8.7 8.7 L7.7 9.9 L6.5 8.9 L5.4 12 L3.4 12.9 L1 9.4 Z" fill="#eedb50" stroke="#fbeb66" stroke-width=".7" stroke-linejoin="round"/></svg><span class="n">shipper_id</span><span class="t" style="left:127.7px">smallint</span><span class="g">« pk »</span></div>
<div class="r" style="top:38.66px"><svg class="ic" viewBox="0 0 14 14"><circle cx="7" cy="7" r="5" fill="#cc3e24" stroke="#e8685a" stroke-width="1"/></svg><span class="n">company_name</span><span class="t" style="left:127.7px">character varying(40)</span><span class="g">« nn »</span></div>
<div class="r" style="top:55.62px"><svg class="ic" viewBox="0 0 14 14"><circle cx="7" cy="7" r="5" fill="#c0c0c0" stroke="#ececec" stroke-width="1.1"/></svg><span class="n">phone</span><span class="t" style="left:127.7px">character varying(24)</span></div>
<div class="r er" style="top:75.88px"><svg class="ic" viewBox="0 0 14 14"><path d="M1.1 7.3 L7.4 1.4 L12.9 6.1 L12.9 12.5 L6 12.5 Z" fill="#4a90d8" stroke="#62b0ff" stroke-width=".9" stroke-linejoin="round"/></svg><span class="n">pk_shippers</span><span class="t" style="left:127.7px">constraint</span><span class="g">« pk »</span></div>
<svg class="fg" style="left:129.05px;top:92.74px" width="64" height="16" viewBox="-32 -8 64 16"><path d="M-20.6 -4 L-16.6 0 L-20.6 4 L-24.6 0 Z" fill="#3c9af0"/><path d="M-5.4 4.2 L0 -4.6 L5.4 4.2 Z" fill="#3c9af0"/><path d="M15 -4.4 L26 -4.4 L20.5 4.4 Z" fill="#3c9af0" opacity=".55"/></svg>
</div>
<div class="tb" style="left:1147.20px;top:995.00px;width:318.30px;height:348.58px">
<div class="tt"><span><i>public.</i>orders</span></div>
<div class="bd" style="top:20.6px;height:327.98px"></div>
<div class="sp" style="top:259.84px"></div>
<div class="sp" style="top:329.88px"></div>
<div class="r pkr" style="top:21.20px"><svg class="ic" viewBox="0 0 14 14"><path d="M1 5.2 L3.4 1.3 L5.2 1.3 L6.3 4.3 L13 4.3 L13 10 L11.5 10 L10.7 8.7 L9.7 9.9 L8.7 8.7 L7.7 9.9 L6.5 8.9 L5.4 12 L3.4 12.9 L1 9.4 Z" fill="#eedb50" stroke="#fbeb66" stroke-width=".7" stroke-linejoin="round"/></svg><span class="n">order_id</span><span class="t" style="left:133.0px">smallint</span><span class="g">« pk »</span></div>
<div class="r" style="top:38.16px"><svg class="ic" viewBox="0 0 14 14"><path d="M1.2 4.9 L6.8 4.9 L6.8 1.9 L13 7 L6.8 12.1 L6.8 9.3 L1.2 9.3 Z" fill="#40b030" stroke="#7fe070" stroke-width=".8" stroke-linejoin="round"/></svg><span class="n">customer_id</span><span class="t" style="left:133.0px">character varying(5)</span><span class="g">« fk »</span></div>
<div class="r" style="top:55.12px"><svg class="ic" viewBox="0 0 14 14"><path d="M1.2 4.9 L6.8 4.9 L6.8 1.9 L13 7 L6.8 12.1 L6.8 9.3 L1.2 9.3 Z" fill="#40b030" stroke="#7fe070" stroke-width=".8" stroke-linejoin="round"/></svg><span class="n">employee_id</span><span class="t" style="left:133.0px">smallint</span><span class="g">« fk »</span></div>
<div class="r" style="top:72.08px"><svg class="ic" viewBox="0 0 14 14"><circle cx="7" cy="7" r="5" fill="#c0c0c0" stroke="#ececec" stroke-width="1.1"/></svg><span class="n">order_date</span><span class="t" style="left:133.0px">date</span></div>
<div class="r" style="top:89.04px"><svg class="ic" viewBox="0 0 14 14"><circle cx="7" cy="7" r="5" fill="#c0c0c0" stroke="#ececec" stroke-width="1.1"/></svg><span class="n">required_date</span><span class="t" style="left:133.0px">date</span></div>
<div class="r" style="top:106.00px"><svg class="ic" viewBox="0 0 14 14"><circle cx="7" cy="7" r="5" fill="#c0c0c0" stroke="#ececec" stroke-width="1.1"/></svg><span class="n">shipped_date</span><span class="t" style="left:133.0px">date</span></div>
<div class="r" style="top:122.96px"><svg class="ic" viewBox="0 0 14 14"><path d="M1.2 4.9 L6.8 4.9 L6.8 1.9 L13 7 L6.8 12.1 L6.8 9.3 L1.2 9.3 Z" fill="#40b030" stroke="#7fe070" stroke-width=".8" stroke-linejoin="round"/></svg><span class="n">ship_via</span><span class="t" style="left:133.0px">smallint</span><span class="g">« fk »</span></div>
<div class="r" style="top:139.92px"><svg class="ic" viewBox="0 0 14 14"><circle cx="7" cy="7" r="5" fill="#c0c0c0" stroke="#ececec" stroke-width="1.1"/></svg><span class="n">freight</span><span class="t" style="left:133.0px">real</span></div>
<div class="r" style="top:156.88px"><svg class="ic" viewBox="0 0 14 14"><circle cx="7" cy="7" r="5" fill="#c0c0c0" stroke="#ececec" stroke-width="1.1"/></svg><span class="n">ship_name</span><span class="t" style="left:133.0px">character varying(40)</span></div>
<div class="r" style="top:173.84px"><svg class="ic" viewBox="0 0 14 14"><circle cx="7" cy="7" r="5" fill="#c0c0c0" stroke="#ececec" stroke-width="1.1"/></svg><span class="n">ship_address</span><span class="t" style="left:133.0px">character varying(60)</span></div>
<div class="r" style="top:190.80px"><svg class="ic" viewBox="0 0 14 14"><circle cx="7" cy="7" r="5" fill="#c0c0c0" stroke="#ececec" stroke-width="1.1"/></svg><span class="n">ship_city</span><span class="t" style="left:133.0px">character varying(15)</span></div>
<div class="r" style="top:207.76px"><svg class="ic" viewBox="0 0 14 14"><circle cx="7" cy="7" r="5" fill="#c0c0c0" stroke="#ececec" stroke-width="1.1"/></svg><span class="n">ship_region</span><span class="t" style="left:133.0px">character varying(15)</span></div>
<div class="r" style="top:224.72px"><svg class="ic" viewBox="0 0 14 14"><circle cx="7" cy="7" r="5" fill="#c0c0c0" stroke="#ececec" stroke-width="1.1"/></svg><span class="n">ship_postal_code</span><span class="t" style="left:133.0px">character varying(10)</span></div>
<div class="r" style="top:241.68px"><svg class="ic" viewBox="0 0 14 14"><circle cx="7" cy="7" r="5" fill="#c0c0c0" stroke="#ececec" stroke-width="1.1"/></svg><span class="n">ship_country</span><span class="t" style="left:133.0px">character varying(15)</span></div>
<div class="r er" style="top:261.74px"><svg class="ic" viewBox="0 0 14 14"><path d="M1.1 7.3 L7.4 1.4 L12.9 6.1 L12.9 12.5 L6 12.5 Z" fill="#4a90d8" stroke="#62b0ff" stroke-width=".9" stroke-linejoin="round"/></svg><span class="n">pk_orders</span><span class="t" style="left:159.1px">constraint</span><span class="g">« pk »</span></div>
<div class="r er" style="top:278.70px"><svg class="ic" viewBox="0 0 14 14"><path d="M1.1 7.3 L7.4 1.4 L12.9 6.1 L12.9 12.5 L6 12.5 Z" fill="#4a90d8" stroke="#62b0ff" stroke-width=".9" stroke-linejoin="round"/></svg><span class="n">fk_orders_customers</span><span class="t" style="left:159.1px">constraint</span><span class="g">« fk »</span></div>
<div class="r er" style="top:295.66px"><svg class="ic" viewBox="0 0 14 14"><path d="M1.1 7.3 L7.4 1.4 L12.9 6.1 L12.9 12.5 L6 12.5 Z" fill="#4a90d8" stroke="#62b0ff" stroke-width=".9" stroke-linejoin="round"/></svg><span class="n">fk_orders_employees</span><span class="t" style="left:159.1px">constraint</span><span class="g">« fk »</span></div>
<div class="r er" style="top:312.62px"><svg class="ic" viewBox="0 0 14 14"><path d="M1.1 7.3 L7.4 1.4 L12.9 6.1 L12.9 12.5 L6 12.5 Z" fill="#4a90d8" stroke="#62b0ff" stroke-width=".9" stroke-linejoin="round"/></svg><span class="n">fk_orders_shippers</span><span class="t" style="left:159.1px">constraint</span><span class="g">« fk »</span></div>
<svg class="fg" style="left:124.55px;top:330.18px" width="64" height="16" viewBox="-32 -8 64 16"><path d="M-20.6 -4 L-16.6 0 L-20.6 4 L-24.6 0 Z" fill="#3c9af0"/><path d="M-5.4 4.2 L0 -4.6 L5.4 4.2 Z" fill="#3c9af0"/><path d="M15 -4.4 L26 -4.4 L20.5 4.4 Z" fill="#3c9af0" opacity=".55"/></svg>
</div>
<div class="tb" style="left:223.20px;top:1168.25px;width:318.40px;height:128.10px">
<div class="tt"><span><i>public.</i>categories</span></div>
<div class="bd" style="top:20.6px;height:107.50px"></div>
<div class="sp" style="top:90.24px"></div>
<div class="sp" style="top:109.40px"></div>
<div class="r pkr" style="top:21.00px"><svg class="ic" viewBox="0 0 14 14"><path d="M1 5.2 L3.4 1.3 L5.2 1.3 L6.3 4.3 L13 4.3 L13 10 L11.5 10 L10.7 8.7 L9.7 9.9 L8.7 8.7 L7.7 9.9 L6.5 8.9 L5.4 12 L3.4 12.9 L1 9.4 Z" fill="#eedb50" stroke="#fbeb66" stroke-width=".7" stroke-linejoin="round"/></svg><span class="n">category_id</span><span class="t" style="left:123.6px">smallint</span><span class="g">« pk »</span></div>
<div class="r" style="top:37.96px"><svg class="ic" viewBox="0 0 14 14"><circle cx="7" cy="7" r="5" fill="#cc3e24" stroke="#e8685a" stroke-width="1"/></svg><span class="n">category_name</span><span class="t" style="left:123.6px">character varying(15)</span><span class="g">« nn »</span></div>
<div class="r" style="top:54.92px"><svg class="ic" viewBox="0 0 14 14"><circle cx="7" cy="7" r="5" fill="#c0c0c0" stroke="#ececec" stroke-width="1.1"/></svg><span class="n">description</span><span class="t" style="left:123.6px">text</span></div>
<div class="r" style="top:71.88px"><svg class="ic" viewBox="0 0 14 14"><circle cx="7" cy="7" r="5" fill="#c0c0c0" stroke="#ececec" stroke-width="1.1"/></svg><span class="n">picture</span><span class="t" style="left:123.6px">bytea</span></div>
<div class="r er" style="top:91.84px"><svg class="ic" viewBox="0 0 14 14"><path d="M1.1 7.3 L7.4 1.4 L12.9 6.1 L12.9 12.5 L6 12.5 Z" fill="#4a90d8" stroke="#62b0ff" stroke-width=".9" stroke-linejoin="round"/></svg><span class="n">pk_categories</span><span class="t" style="left:123.6px">constraint</span><span class="g">« pk »</span></div>
<svg class="fg" style="left:124.60px;top:109.70px" width="64" height="16" viewBox="-32 -8 64 16"><path d="M-20.6 -4 L-16.6 0 L-20.6 4 L-24.6 0 Z" fill="#3c9af0"/><path d="M-5.4 4.2 L0 -4.6 L5.4 4.2 Z" fill="#3c9af0"/><path d="M15 -4.4 L26 -4.4 L20.5 4.4 Z" fill="#3c9af0" opacity=".55"/></svg>
</div>
<div class="tb" style="left:685.20px;top:1226.00px;width:327.30px;height:263.78px">
<div class="tt"><span><i>public.</i>suppliers</span></div>
<div class="bd" style="top:20.6px;height:243.18px"></div>
<div class="sp" style="top:225.92px"></div>
<div class="sp" style="top:245.08px"></div>
<div class="r pkr" style="top:21.30px"><svg class="ic" viewBox="0 0 14 14"><path d="M1 5.2 L3.4 1.3 L5.2 1.3 L6.3 4.3 L13 4.3 L13 10 L11.5 10 L10.7 8.7 L9.7 9.9 L8.7 8.7 L7.7 9.9 L6.5 8.9 L5.4 12 L3.4 12.9 L1 9.4 Z" fill="#eedb50" stroke="#fbeb66" stroke-width=".7" stroke-linejoin="round"/></svg><span class="n">supplier_id</span><span class="t" style="left:127.7px">smallint</span><span class="g">« pk »</span></div>
<div class="r" style="top:38.26px"><svg class="ic" viewBox="0 0 14 14"><circle cx="7" cy="7" r="5" fill="#cc3e24" stroke="#e8685a" stroke-width="1"/></svg><span class="n">company_name</span><span class="t" style="left:127.7px">character varying(40)</span><span class="g">« nn »</span></div>
<div class="r" style="top:55.22px"><svg class="ic" viewBox="0 0 14 14"><circle cx="7" cy="7" r="5" fill="#c0c0c0" stroke="#ececec" stroke-width="1.1"/></svg><span class="n">contact_name</span><span class="t" style="left:127.7px">character varying(30)</span></div>
<div class="r" style="top:72.18px"><svg class="ic" viewBox="0 0 14 14"><circle cx="7" cy="7" r="5" fill="#c0c0c0" stroke="#ececec" stroke-width="1.1"/></svg><span class="n">contact_title</span><span class="t" style="left:127.7px">character varying(30)</span></div>
<div class="r" style="top:89.14px"><svg class="ic" viewBox="0 0 14 14"><circle cx="7" cy="7" r="5" fill="#c0c0c0" stroke="#ececec" stroke-width="1.1"/></svg><span class="n">address</span><span class="t" style="left:127.7px">character varying(60)</span></div>
<div class="r" style="top:106.10px"><svg class="ic" viewBox="0 0 14 14"><circle cx="7" cy="7" r="5" fill="#c0c0c0" stroke="#ececec" stroke-width="1.1"/></svg><span class="n">city</span><span class="t" style="left:127.7px">character varying(15)</span></div>
<div class="r" style="top:123.06px"><svg class="ic" viewBox="0 0 14 14"><circle cx="7" cy="7" r="5" fill="#c0c0c0" stroke="#ececec" stroke-width="1.1"/></svg><span class="n">region</span><span class="t" style="left:127.7px">character varying(15)</span></div>
<div class="r" style="top:140.02px"><svg class="ic" viewBox="0 0 14 14"><circle cx="7" cy="7" r="5" fill="#c0c0c0" stroke="#ececec" stroke-width="1.1"/></svg><span class="n">postal_code</span><span class="t" style="left:127.7px">character varying(10)</span></div>
<div class="r" style="top:156.98px"><svg class="ic" viewBox="0 0 14 14"><circle cx="7" cy="7" r="5" fill="#c0c0c0" stroke="#ececec" stroke-width="1.1"/></svg><span class="n">country</span><span class="t" style="left:127.7px">character varying(15)</span></div>
<div class="r" style="top:173.94px"><svg class="ic" viewBox="0 0 14 14"><circle cx="7" cy="7" r="5" fill="#c0c0c0" stroke="#ececec" stroke-width="1.1"/></svg><span class="n">phone</span><span class="t" style="left:127.7px">character varying(24)</span></div>
<div class="r" style="top:190.90px"><svg class="ic" viewBox="0 0 14 14"><circle cx="7" cy="7" r="5" fill="#c0c0c0" stroke="#ececec" stroke-width="1.1"/></svg><span class="n">fax</span><span class="t" style="left:127.7px">character varying(24)</span></div>
<div class="r" style="top:207.86px"><svg class="ic" viewBox="0 0 14 14"><circle cx="7" cy="7" r="5" fill="#c0c0c0" stroke="#ececec" stroke-width="1.1"/></svg><span class="n">homepage</span><span class="t" style="left:127.7px">text</span></div>
<div class="r er" style="top:227.62px"><svg class="ic" viewBox="0 0 14 14"><path d="M1.1 7.3 L7.4 1.4 L12.9 6.1 L12.9 12.5 L6 12.5 Z" fill="#4a90d8" stroke="#62b0ff" stroke-width=".9" stroke-linejoin="round"/></svg><span class="n">pk_suppliers</span><span class="t" style="left:127.7px">constraint</span><span class="g">« pk »</span></div>
<svg class="fg" style="left:129.05px;top:245.38px" width="64" height="16" viewBox="-32 -8 64 16"><path d="M-20.6 -4 L-16.6 0 L-20.6 4 L-24.6 0 Z" fill="#3c9af0"/><path d="M-5.4 4.2 L0 -4.6 L5.4 4.2 Z" fill="#3c9af0"/><path d="M15 -4.4 L26 -4.4 L20.5 4.4 Z" fill="#3c9af0" opacity=".55"/></svg>
</div>
<div class="tb" style="left:1743.95px;top:1149.00px;width:366.80px;height:128.10px">
<div class="tt"><span><i>public.</i>employee_territories</span></div>
<div class="bd" style="top:20.6px;height:107.50px"></div>
<div class="sp" style="top:56.32px"></div>
<div class="sp" style="top:109.40px"></div>
<div class="r pkr" style="top:21.70px"><svg class="ic" viewBox="0 0 14 14"><path d="M1 5.2 L3.4 1.3 L5.2 1.3 L6.3 4.3 L13 4.3 L13 10 L11.5 10 L10.7 8.7 L9.7 9.9 L8.7 8.7 L7.7 9.9 L6.5 8.9 L5.4 12 L3.4 12.9 L1 9.4 Z" fill="#eedb50" stroke="#fbeb66" stroke-width=".7" stroke-linejoin="round"/></svg><span class="n">employee_id</span><span class="t" style="left:110.1px">smallint</span><span class="g">« pk fk »</span></div>
<div class="r pkr" style="top:38.66px"><svg class="ic" viewBox="0 0 14 14"><path d="M1 5.2 L3.4 1.3 L5.2 1.3 L6.3 4.3 L13 4.3 L13 10 L11.5 10 L10.7 8.7 L9.7 9.9 L8.7 8.7 L7.7 9.9 L6.5 8.9 L5.4 12 L3.4 12.9 L1 9.4 Z" fill="#eedb50" stroke="#fbeb66" stroke-width=".7" stroke-linejoin="round"/></svg><span class="n">territory_id</span><span class="t" style="left:110.1px">character varying(20)</span><span class="g">« pk fk »</span></div>
<div class="r er" style="top:58.82px"><svg class="ic" viewBox="0 0 14 14"><path d="M1.1 7.3 L7.4 1.4 L12.9 6.1 L12.9 12.5 L6 12.5 Z" fill="#4a90d8" stroke="#62b0ff" stroke-width=".9" stroke-linejoin="round"/></svg><span class="n">pk_employee_territories</span><span class="t" style="left:247.0px">constraint</span><span class="g">« pk »</span></div>
<div class="r er" style="top:75.78px"><svg class="ic" viewBox="0 0 14 14"><path d="M1.1 7.3 L7.4 1.4 L12.9 6.1 L12.9 12.5 L6 12.5 Z" fill="#4a90d8" stroke="#62b0ff" stroke-width=".9" stroke-linejoin="round"/></svg><span class="n">fk_employee_territories_territories</span><span class="t" style="left:247.0px">constraint</span><span class="g">« fk »</span></div>
<div class="r er" style="top:92.74px"><svg class="ic" viewBox="0 0 14 14"><path d="M1.1 7.3 L7.4 1.4 L12.9 6.1 L12.9 12.5 L6 12.5 Z" fill="#4a90d8" stroke="#62b0ff" stroke-width=".9" stroke-linejoin="round"/></svg><span class="n">fk_employee_territories_employees</span><span class="t" style="left:247.0px">constraint</span><span class="g">« fk »</span></div>
<svg class="fg" style="left:148.80px;top:109.70px" width="64" height="16" viewBox="-32 -8 64 16"><path d="M-20.6 -4 L-16.6 0 L-20.6 4 L-24.6 0 Z" fill="#3c9af0"/><path d="M-5.4 4.2 L0 -4.6 L5.4 4.2 Z" fill="#3c9af0"/><path d="M15 -4.4 L26 -4.4 L20.5 4.4 Z" fill="#3c9af0" opacity=".55"/></svg>
</div>
<div class="tb" style="left:2282.95px;top:1168.25px;width:342.50px;height:75.02px">
<div class="tt"><span><i>public.</i>region</span></div>
<div class="bd" style="top:20.6px;height:54.42px"></div>
<div class="sp" style="top:56.32px"></div>
<div class="r pkr" style="top:21.00px"><svg class="ic" viewBox="0 0 14 14"><path d="M1 5.2 L3.4 1.3 L5.2 1.3 L6.3 4.3 L13 4.3 L13 10 L11.5 10 L10.7 8.7 L9.7 9.9 L8.7 8.7 L7.7 9.9 L6.5 8.9 L5.4 12 L3.4 12.9 L1 9.4 Z" fill="#eedb50" stroke="#fbeb66" stroke-width=".7" stroke-linejoin="round"/></svg><span class="n">region_id</span><span class="t" style="left:143.1px">smallint</span><span class="g">« pk »</span></div>
<div class="r" style="top:37.96px"><svg class="ic" viewBox="0 0 14 14"><circle cx="7" cy="7" r="5" fill="#cc3e24" stroke="#e8685a" stroke-width="1"/></svg><span class="n">region_description</span><span class="t" style="left:143.1px">character varying(60)</span><span class="g">« nn »</span></div>
<svg class="fg" style="left:136.65px;top:56.62px" width="64" height="16" viewBox="-32 -8 64 16"><path d="M-20.6 -4 L-16.6 0 L-20.6 4 L-24.6 0 Z" fill="#3c9af0"/><path d="M-5.4 4.2 L0 -4.6 L5.4 4.2 Z" fill="#3c9af0"/><path d="M15 -4.4 L26 -4.4 L20.5 4.4 Z" fill="#3c9af0"/></svg>
</div>
<div class="tb" style="left:1974.95px;top:1495.50px;width:351.30px;height:128.10px">
<div class="tt"><span><i>public.</i>territories</span></div>
<div class="bd" style="top:20.6px;height:107.50px"></div>
<div class="sp" style="top:73.28px"></div>
<div class="sp" style="top:109.40px"></div>
<div class="r pkr" style="top:21.00px"><svg class="ic" viewBox="0 0 14 14"><path d="M1 5.2 L3.4 1.3 L5.2 1.3 L6.3 4.3 L13 4.3 L13 10 L11.5 10 L10.7 8.7 L9.7 9.9 L8.7 8.7 L7.7 9.9 L6.5 8.9 L5.4 12 L3.4 12.9 L1 9.4 Z" fill="#eedb50" stroke="#fbeb66" stroke-width=".7" stroke-linejoin="round"/></svg><span class="n">territory_id</span><span class="t" style="left:152.1px">character varying(20)</span><span class="g">« pk »</span></div>
<div class="r" style="top:37.96px"><svg class="ic" viewBox="0 0 14 14"><circle cx="7" cy="7" r="5" fill="#cc3e24" stroke="#e8685a" stroke-width="1"/></svg><span class="n">territory_description</span><span class="t" style="left:152.1px">character varying(60)</span><span class="g">« nn »</span></div>
<div class="r" style="top:54.92px"><svg class="ic" viewBox="0 0 14 14"><path d="M1.2 4.9 L6.8 4.9 L6.8 1.9 L13 7 L6.8 12.1 L6.8 9.3 L1.2 9.3 Z" fill="#40b030" stroke="#7fe070" stroke-width=".8" stroke-linejoin="round"/></svg><span class="n">region_id</span><span class="t" style="left:152.1px">smallint</span><span class="g">« fk nn »</span></div>
<div class="r er" style="top:75.18px"><svg class="ic" viewBox="0 0 14 14"><path d="M1.1 7.3 L7.4 1.4 L12.9 6.1 L12.9 12.5 L6 12.5 Z" fill="#4a90d8" stroke="#62b0ff" stroke-width=".9" stroke-linejoin="round"/></svg><span class="n">pk_territories</span><span class="t" style="left:152.1px">constraint</span><span class="g">« pk »</span></div>
<div class="r er" style="top:92.14px"><svg class="ic" viewBox="0 0 14 14"><path d="M1.1 7.3 L7.4 1.4 L12.9 6.1 L12.9 12.5 L6 12.5 Z" fill="#4a90d8" stroke="#62b0ff" stroke-width=".9" stroke-linejoin="round"/></svg><span class="n">fk_territories_region</span><span class="t" style="left:152.1px">constraint</span><span class="g">« fk »</span></div>
<svg class="fg" style="left:141.05px;top:109.70px" width="64" height="16" viewBox="-32 -8 64 16"><path d="M-20.6 -4 L-16.6 0 L-20.6 4 L-24.6 0 Z" fill="#3c9af0"/><path d="M-5.4 4.2 L0 -4.6 L5.4 4.2 Z" fill="#3c9af0"/><path d="M15 -4.4 L26 -4.4 L20.5 4.4 Z" fill="#3c9af0" opacity=".55"/></svg>
</div>
</div></div>
<div id="sel"></div><div id="strip"></div>
<svg id="side" width="2664" height="1730" viewBox="0 0 2664 1730">
<rect x="19.4" y="21.4" width="42.6" height="8" rx="3" fill="#fff" stroke="#7a7a7a" stroke-width="1.2"/>
<rect x="19.4" y="36.1" width="42.6" height="8" rx="3" fill="#fff" stroke="#7a7a7a" stroke-width="1.2"/>
<rect x="19.4" y="51.0" width="42.6" height="8" rx="3" fill="#fff" stroke="#7a7a7a" stroke-width="1.2"/>
<path d="M102.3 15 H130.1 L141.1 26 V63 Q141.1 66 138.1 66 H102.3 Q99.3 66 99.3 63 V18 Q99.3 15 102.3 15 Z" fill="#fff" stroke="#6c6c6c" stroke-width="2" stroke-linejoin="round"/>
<polygon points="136.6,39.6 140.9,48.3 150.5,49.7 143.5,56.5 145.2,66.0 136.6,61.5 128.0,66.0 129.7,56.5 122.7,49.7 132.3,48.3" fill="#fff060" stroke="#9a8a20" stroke-width="2" stroke-linejoin="round"/>
<rect x="193.4" y="15.4" width="29.6" height="24" rx="2.5" fill="#fff" stroke="#6c6c6c" stroke-width="1.8"/><path d="M199.3 23.1 H217.1 M206.7 30.3 H217.1" stroke="#6c6c6c" stroke-width="1.6" fill="none"/>
<path d="M184.7 29.9 H199.1 L201.9 34.7 H228.9 L225.2 58.7 H189.3 Z" fill="#fff060" stroke="#8a7c1c" stroke-width="2" stroke-linejoin="round"/>
<circle cx="221.4" cy="53.6" r="11.6" fill="#60e0ff" stroke="#2b8ea6" stroke-width="2"/><path d="M221.4 47 V54.6 H226.6" fill="none" stroke="#2b8ea6" stroke-width="2" stroke-linecap="round"/>
<rect x="278.2" y="17.2" width="32.6" height="26" rx="2.5" fill="#fff" stroke="#6c6c6c" stroke-width="1.8"/><path d="M284.7 25.5 H304.3 M292.9 33.3 H304.3" stroke="#6c6c6c" stroke-width="1.6" fill="none"/>
<path d="M268.4 32.1 H284.4 L287.5 37.4 H317.3 L313.2 64.3 H273.6 Z" fill="#fff060" stroke="#8a7c1c" stroke-width="2" stroke-linejoin="round"/>
<path d="M358.7 26.0 H394.7 L401.6 48.2 H351.8 Z" fill="#dfe6e8" stroke="#4d6a70" stroke-width="1.8" stroke-linejoin="round"/><rect x="351.0" y="48.2" width="51.4" height="17.4" rx="4.0" fill="#dfe6e8" stroke="#4d6a70" stroke-width="1.8"/>
<path d="M357.6 58.8 H396" stroke="#4d6a70" stroke-width="1.8"/><circle cx="394.6" cy="54" r="1.3" fill="#4d6a70"/>
<path d="M371.9 14.8 H382.3 V29.6 H389.7 L377.1 43.2 L364.5 29.6 H371.9 Z" fill="#5cdcff" stroke="#2b8ea6" stroke-width="1.6" stroke-linejoin="round"/>
<path d="M442.6 26.0 H478.6 L485.5 48.2 H435.7 Z" fill="#dfe6e8" stroke="#4d6a70" stroke-width="1.8" stroke-linejoin="round"/><rect x="434.9" y="48.2" width="51.4" height="17.4" rx="4.0" fill="#dfe6e8" stroke="#4d6a70" stroke-width="1.8"/>
<rect x="438.2" y="53" width="20.4" height="7.8" fill="#5fe0ff"/><path d="M461.4 51 V62.4 M458.8 51 H464 M458.8 62.4 H464" stroke="#4d6a70" stroke-width="1.6" fill="none"/>
<path d="M455.8 14.8 H466.2 V29.6 H473.6 L461.0 43.2 L448.4 29.6 H455.8 Z" fill="#72e77a" stroke="#3a9a44" stroke-width="1.6" stroke-linejoin="round"/>
<path d="M525.1 23.4 H553.9 L559.4 42.1 H519.6 Z" fill="#dfe6e8" stroke="#4d6a70" stroke-width="1.8" stroke-linejoin="round"/><rect x="519.0" y="42.1" width="41.0" height="14.7" rx="3.3" fill="#dfe6e8" stroke="#4d6a70" stroke-width="1.8"/>
<rect x="521.6" y="46.6" width="16.4" height="6" fill="#5fe0ff"/><path d="M540.6 45 V54.4 M538.6 45 H542.6 M538.6 54.4 H542.6" stroke="#4d6a70" stroke-width="1.4" fill="none"/>
<path d="M536.3 14.4 H545.1 V26.9 H551.3 L540.7 38.4 L530.1 26.9 H536.3 Z" fill="#d878f4" stroke="#8a3aa8" stroke-width="1.6" stroke-linejoin="round"/>
<path d="M557 40 H565.6 L570.6 45 V57 Q570.6 60 567.6 60 H557 Q554 60 554 57 V43 Q554 40 557 40 Z" fill="#e8e8e8" stroke="#6c6c6c" stroke-width="1.6" stroke-linejoin="round"/>
<path d="M551.6 45 H560.2 L565.2 50 V63 Q565.2 66 562.2 66 H551.6 Q548.6 66 548.6 63 V48 Q548.6 45 551.6 45 Z" fill="#fff" stroke="#6c6c6c" stroke-width="1.6" stroke-linejoin="round"/>
<path d="M618.4 30 V15 H633 L638.4 20.4 V30 Z" fill="#fff" stroke="#6c6c6c" stroke-width="1.8" stroke-linejoin="round"/>
<path d="M610.4 26 H616 V30.4 H641 V26 H646.6 L651.6 37 V53.4 Q651.6 55 650 55 H607 Q605.4 55 605.4 53.4 V37 Z" fill="#e4e4e4" stroke="#6c6c6c" stroke-width="1.8" stroke-linejoin="round"/>
<path d="M605.4 37 H651.6" stroke="#6c6c6c" stroke-width="1.6"/><circle cx="645" cy="42.6" r="1.5" fill="#6c6c6c"/><circle cx="645" cy="48.4" r="1.5" fill="#6c6c6c"/>
<path d="M616.6 48 H640.4 L643.4 66 H613 Z" fill="#fff" stroke="#6c6c6c" stroke-width="1.8" stroke-linejoin="round"/><path d="M626 52.6 H633 M621 57 H635.6 M619 61.4 H635.6" stroke="#6c6c6c" stroke-width="1.6"/>
<path d="M673 5.6 V76" stroke="#3a4058" stroke-width="1.6"/>
<path d="M928.5 5.6 V76" stroke="#3a4058" stroke-width="1.6"/>
<path d="M1688 5.6 V76" stroke="#3a4058" stroke-width="1.6"/>
<path d="M2316 5.6 V76" stroke="#3a4058" stroke-width="1.6"/>
<path d="M2571.8 5.6 V76" stroke="#3a4058" stroke-width="1.6"/>
<path d="M721.4 45.8 L742.4 66.4" stroke="#2f7f8e" stroke-width="2.2" stroke-linecap="round"/><circle cx="708.8" cy="32.6" r="17.2" fill="#c8f4ff" stroke="#2f7f8e" stroke-width="2.2"/><path d="M700.6 32.6 H717" stroke="#2f7f8e" stroke-width="2"/>
<path d="M805.5 45.8 L826.5 66.4" stroke="#2f7f8e" stroke-width="2.2" stroke-linecap="round"/><circle cx="792.9" cy="32.6" r="17.2" fill="#c8f4ff" stroke="#2f7f8e" stroke-width="2.2"/><text x="792.9" y="39.2" text-anchor="middle" font-family="Liberation Sans, sans-serif" font-weight="bold" font-size="17" fill="#2f7f8e" letter-spacing="-0.5">1:1</text>
<path d="M889.4 45.8 L910.4 66.4" stroke="#2f7f8e" stroke-width="2.2" stroke-linecap="round"/><circle cx="876.8" cy="32.6" r="17.2" fill="#c8f4ff" stroke="#2f7f8e" stroke-width="2.2"/><path d="M868.6 32.6 H885 M876.8 24.4 V40.8" stroke="#2f7f8e" stroke-width="2"/>
<path d="M976.2 45.8 L997.2 66.4" stroke="#2f7f8e" stroke-width="2.2" stroke-linecap="round"/><circle cx="963.6" cy="32.6" r="17.2" fill="#c8f4ff" stroke="#2f7f8e" stroke-width="2.2"/><rect x="954.9" y="30.0" width="11.5" height="12.2" rx="2.2" fill="#62e2ff"/><path d="M954.9 39.1 Q954.9 42.2 957.4 42.2 H964.2 Q966.4 42.2 966.4 39.1 V32.8 Q966.4 30.0 964.2 30.0" fill="none" stroke="#2b7e92" stroke-width="1.5" stroke-linecap="round"/><path d="M966.4 42.2 V29.3 L968.1 24.4 Q969.2 22.6 970.4 24.6 L977.0 39.1 Q977.7 42.2 975.5 42.2 Z" fill="#76e87e"/><path d="M967.9 24.6 Q969.2 22.6 970.4 24.6 L977.0 39.1 Q977.7 42.2 975.5 42.2 H970.3" fill="none" stroke="#3a9a44" stroke-width="1.5" stroke-linecap="round"/><circle cx="955.7" cy="29.1" r="5.3" fill="#ff5c5c" stroke="#8e2626" stroke-width="1.5"/>
<path d="M1045 17.4 Q1049.4 16.4 1051.4 18.4 V45 H1031.6 L1041.4 24 Z" fill="#dfe6e8" stroke="#4d6a70" stroke-width="1.8" stroke-linejoin="round"/>
<path d="M1066.8 17.4 Q1062.4 16.4 1060.4 18.4 V45 H1080.2 L1070.4 24 Z" fill="#dfe6e8" stroke="#4d6a70" stroke-width="1.8" stroke-linejoin="round"/>
<path d="M1047 35 Q1055.9 29 1064.8 35" fill="none" stroke="#4d6a70" stroke-width="1.8"/>
<circle cx="1041.6" cy="53" r="10.8" fill="#c8f4ff" stroke="#2f7f8e" stroke-width="2"/><circle cx="1070.2" cy="53" r="10.8" fill="#c8f4ff" stroke="#2f7f8e" stroke-width="2"/>
<rect x="1105.1" y="5.9" width="70.2" height="70" rx="8" fill="#1b74b4" stroke="#2b9df0" stroke-width="1.6"/>
<rect x="1189.1" y="5.9" width="70.2" height="70" rx="8" fill="#1b74b4" stroke="#2b9df0" stroke-width="1.6"/>
<rect x="1273.1" y="5.9" width="70.2" height="70" rx="8" fill="#1b74b4" stroke="#2b9df0" stroke-width="1.6"/>
<rect x="1357.1" y="5.9" width="70.2" height="70" rx="8" fill="#1b74b4" stroke="#2b9df0" stroke-width="1.6"/>
<rect x="1441.1" y="5.9" width="70.2" height="70" rx="8" fill="#1b74b4" stroke="#2b9df0" stroke-width="1.6"/>
<rect x="1114.4" y="15.6" width="50.6" height="49.8" rx="5" fill="#fff" stroke="#6c6c6c" stroke-width="1.8"/><path d="M1131.3 15.6 V65.39999999999999 M1148.1 15.6 V65.39999999999999 M1114.4 32.2 H1165.0 M1114.4 48.8 H1165.0" stroke="#6c6c6c" stroke-width="1.8" fill="none"/>
<rect x="1199.2" y="16.2" width="44" height="43.6" rx="5" fill="#fff" stroke="#6c6c6c" stroke-width="1.8"/><path d="M1213.9 16.2 V59.8 M1228.5 16.2 V59.8 M1199.2 30.7 H1243.2 M1199.2 45.3 H1243.2" stroke="#6c6c6c" stroke-width="1.8" fill="none"/>
<path d="M1248.8 17 V52 Q1248.8 65 1236 65 H1198" fill="none" stroke="#6fe4ff" stroke-width="2.2" stroke-dasharray="4.4 3.2"/>
<path d="M1322 22.4 L1326 27.4 L1300.6 52.4 L1304.6 59 L1288.6 59.4 L1290 43.4 L1295.4 47.6 Z" fill="#fff" stroke="#6c6c6c" stroke-width="1.6" stroke-linejoin="round"/>
<path d="M1294.6 27 V23.6 A5.6 5.6 0 0 1 1305.8 23.6 V27" fill="none" stroke="#b8b8b8" stroke-width="2"/>
<rect x="1290.8" y="26.8" width="18.8" height="12.6" rx="2" fill="#fff060" stroke="#8a7c1c" stroke-width="1.6"/><circle cx="1300.2" cy="33" r="1.9" fill="#e8e8e8" stroke="#6c6c6c" stroke-width="1.2"/>
<path d="M1330.8 16 V52 Q1330.8 64.6 1318 64.6 H1282" fill="none" stroke="#6fe4ff" stroke-width="2.2" stroke-dasharray="4.4 3.2"/>
<rect x="1366.4" y="15.6" width="39.2" height="39" rx="5" fill="#fff" stroke="#6c6c6c" stroke-width="1.8"/><path d="M1379.5 15.6 V54.6 M1392.5 15.6 V54.6 M1366.4 28.6 H1405.6000000000001 M1366.4 41.6 H1405.6000000000001" stroke="#6c6c6c" stroke-width="1.8" fill="none"/>
<rect x="1386" y="36" width="20" height="20" fill="#fff"/>
<path d="M1390.4 40 H1398 V53 A5.6 5.6 0 0 0 1409.2 53 V40 H1416.8 V53 A13.2 13.2 0 0 1 1390.4 53 Z" fill="#ff5c5c" stroke="#9a2a2a" stroke-width="1.6" stroke-linejoin="round"/>
<rect x="1390.4" y="40" width="7.6" height="6.4" fill="#e4e4e4" stroke="#6c6c6c" stroke-width="1.4"/><rect x="1409.2" y="40" width="7.6" height="6.4" fill="#e4e4e4" stroke="#6c6c6c" stroke-width="1.4"/>
<rect x="1456.6" y="24.6" width="37.6" height="32" rx="3.5" fill="#fff" stroke="#6c6c6c" stroke-width="1.8"/><rect x="1465.6" y="38.1" width="13.0" height="13.3" rx="2.5" fill="#62e2ff"/><path d="M1465.6 48.0 Q1465.6 51.4 1468.4 51.4 H1476.1 Q1478.6 51.4 1478.6 48.0 V41.1 Q1478.6 38.1 1476.1 38.1" fill="none" stroke="#2b7e92" stroke-width="1.5" stroke-linecap="round"/><path d="M1478.6 51.4 V37.3 L1480.5 31.9 Q1481.7 30.0 1483.1 32.1 L1490.5 48.0 Q1491.3 51.4 1488.8 51.4 Z" fill="#76e87e"/><path d="M1480.3 32.1 Q1481.7 30.0 1483.1 32.1 L1490.5 48.0 Q1491.3 51.4 1488.8 51.4 H1482.9" fill="none" stroke="#3a9a44" stroke-width="1.5" stroke-linecap="round"/><circle cx="1466.4" cy="37.1" r="6.0" fill="#ff5c5c" stroke="#8e2626" stroke-width="1.5"/>
<path d="M1449.6 15 H1459.6 L1449.6 24.4 Z" fill="#fff" stroke="#6c6c6c" stroke-width="1.3" stroke-linejoin="round"/>
<path d="M1501 15 H1491 L1501 24.4 Z" fill="#fff" stroke="#6c6c6c" stroke-width="1.3" stroke-linejoin="round"/>
<path d="M1449.6 66 H1459.6 L1449.6 56.6 Z" fill="#fff" stroke="#6c6c6c" stroke-width="1.3" stroke-linejoin="round"/>
<path d="M1501 66 H1491 L1501 56.6 Z" fill="#fff" stroke="#6c6c6c" stroke-width="1.3" stroke-linejoin="round"/>
<path d="M1541.6 33 V58.2 H1565 M1548.6 33 V40.6 H1576 V33" fill="none" stroke="#8a8a8a" stroke-width="1.6"/>
<rect x="1533.8" y="14.8" width="20.4" height="18.4" rx="1.5" fill="#fff" stroke="#6c6c6c" stroke-width="1.6"/><rect x="1534.8" y="15.8" width="18.4" height="4.4" fill="#5fe0ff" stroke="#2b8ea6" stroke-width="1"/>
<rect x="1565.2" y="14.8" width="20.4" height="18.4" rx="1.5" fill="#fff" stroke="#6c6c6c" stroke-width="1.6"/><rect x="1566.2" y="15.8" width="18.4" height="4.4" fill="#5fe0ff" stroke="#2b8ea6" stroke-width="1"/>
<rect x="1565.2" y="47.6" width="20.4" height="18.4" rx="1.5" fill="#fff" stroke="#6c6c6c" stroke-width="1.6"/><rect x="1566.2" y="48.6" width="18.4" height="4.4" fill="#5fe0ff" stroke="#2b8ea6" stroke-width="1"/>
<path d="M1555.0 40.6 L1559.6 36.0 L1564.1999999999998 40.6 L1559.6 45.2 Z" fill="#f0f0f0" stroke="#6c6c6c" stroke-width="1.3"/>
<path d="M1547.4 58.2 L1552 53.6 L1556.6 58.2 L1552 62.800000000000004 Z" fill="#f0f0f0" stroke="#6c6c6c" stroke-width="1.3"/>
<rect x="1625" y="16" width="44.2" height="42.6" rx="3.5" fill="#66e2ff" stroke="#2b8ea6" stroke-width="2"/>
<path d="M1662.6 22.6 L1644.6 39.4 M1644.4 28.6 V39.6 H1656" fill="none" stroke="#2b8ea6" stroke-width="2" stroke-linecap="round"/>
<rect x="1618.2" y="43.6" width="22" height="21.2" rx="3.5" fill="#bff3ff" stroke="#2b8ea6" stroke-width="1.8" stroke-dasharray="3.4 2.2"/>
<path d="M1751.6 15.6 V65.4 L1711 40.5 Z" fill="#444852" stroke="#33363f" stroke-width="2.4" stroke-linejoin="round"/>
<path d="M1802 15.6 V65.4 L1842.6 40.5 Z" fill="#444852" stroke="#33363f" stroke-width="2.4" stroke-linejoin="round"/>
<rect x="1873.2" y="16.2" width="349.6" height="48.4" rx="6" fill="#394059" stroke="#454d6a" stroke-width="1.4"/>
<path d="M1889.1 31.0 H1911.9 L1916.3 45.0 H1884.7 Z" fill="#dfe6e8" stroke="#4d6a70" stroke-width="1.8" stroke-linejoin="round"/><rect x="1884.2" y="45.0" width="32.6" height="11.0" rx="2.5" fill="#dfe6e8" stroke="#4d6a70" stroke-width="1.8"/>
<path d="M1888.6 52.4 H1912.6" stroke="#4d6a70" stroke-width="1.4"/>
<path d="M1897.2 24.0 H1904.0 V33.2 H1908.6 L1900.6 41.6 L1892.6 33.2 H1897.2 Z" fill="#5cdcff" stroke="#2b8ea6" stroke-width="1.6" stroke-linejoin="round"/>
<path d="M2194.2 35.4 H2211.4 L2202.8 45.4 Z" fill="#dcdde4"/>
<path d="M2249.4 15.2 H2278.0 L2288.0 25.2 V63.2 Q2288.0 66.2 2285.0 66.2 H2249.4 Q2246.4 66.2 2246.4 63.2 V18.2 Q2246.4 15.2 2249.4 15.2 Z" fill="#fff" stroke="#6c6c6c" stroke-width="2" stroke-linejoin="round"/>
<circle cx="2283.7" cy="52.6" r="13.4" fill="#ff5c5c" stroke="#8e2424" stroke-width="2"/><path d="M2278.2 47.2 L2289.2 58 M2289.2 47.2 L2278.2 58" stroke="#8e2424" stroke-width="2.2" stroke-linecap="round"/>
<path d="M2362 44 L2363.5 50.3 C2364 53 2364.2 55 2364.8 57.1 C2365.6 60.4 2367.6 62.6 2370.3 63 C2373.5 63.6 2376.5 63.4 2379.3 62.5 C2382 61.6 2384.4 59.8 2385.7 57.5 C2383.6 57 2381.6 56 2379.8 54.8 C2378.4 56 2376.6 56.8 2374.8 56.6 C2372.4 56.2 2371 54.8 2370.7 53 C2370.4 51.4 2370.3 49.6 2370.3 48 L2370.7 40 Z" fill="#e2e2e2" stroke="#6c6c6c" stroke-width="1.9" stroke-linejoin="round"/>
<g transform="translate(2334.7,14.5) scale(0.773) translate(-46.6,-97.4)"><path d="M61.6 97.4 C57 97.4 54 99.5 52.3 101.8 C48.5 105 46.6 108 46.6 111.7 C46.6 116 48 120 49.8 123.5 C51.5 127.5 53.5 130.5 56.2 132.3 C59 132.6 62 131.2 64.1 128.9 C63.9 131 64 132.5 64.6 133.8 C65.5 136 67.5 137.8 69.5 138.7 C72 140 75 141 77.4 141.7 C82 142.8 88 143 93.3 141.2 L93.3 111.7 C93.3 108 91.5 106 89.2 104.3 C86 101.5 82 99.9 78.3 99.9 C75 99.9 72 100.5 69.5 101.8 C67.5 99 65 97.4 61.6 97.4 Z" fill="#e2e2e2" stroke="#6c6c6c" stroke-width="2.59" stroke-linejoin="round"/><path d="M79.3 127.4 C85 131 93 134 101 134.8 C99.5 137.5 97 139 94.1 139.2 C87 139.5 80 137.5 75.4 134.3 Z" fill="#fff"/><path d="M79.3 127.4 C85 131 93 134 101 134.8 C99.5 137.5 97 139 94.1 139.2 C87 139.5 80 137.5 75.4 134.3" fill="none" stroke="#6c6c6c" stroke-width="2.33" stroke-linecap="round" stroke-linejoin="round"/><path d="M54.7 110.7 C57 107.6 59.4 106 61.6 105.6 C64 105.4 65.6 106.2 65.6 107.7 C64.6 110 64.4 112 64.6 114.1 C64.8 116 65.2 117.6 65.6 119" fill="none" stroke="#6c6c6c" stroke-width="2.33" stroke-linecap="round"/><circle cx="79.3" cy="116.8" r="2" fill="#6c6c6c"/></g>
<circle cx="2345.3" cy="55.3" r="11.2" fill="#5cdcff" stroke="#2b8ea6" stroke-width="2"/><path d="M2339.4 53 A6.2 6.2 0 0 1 2351 52 M2351.2 57.6 A6.2 6.2 0 0 1 2339.6 58.6" fill="none" stroke="#2b8ea6" stroke-width="1.8"/><path d="M2351.6 48.6 V52.6 H2347.6 M2339 62 V58 H2343" fill="none" stroke="#2b8ea6" stroke-width="1.6"/>
<path d="M2437 26.6 H2451" stroke="#b4b4b4" stroke-width="4"/><path d="M2429 32 V44" stroke="#b4b4b4" stroke-width="4"/>
<path d="M2424 22 V19.4 A5 5 0 0 1 2434 19.4 V22" fill="none" stroke="#7ea6b4" stroke-width="1.8"/>
<rect x="2421" y="21.8" width="16" height="10.4" rx="1.6" fill="#fff060" stroke="#8a7c1c" stroke-width="1.6"/><circle cx="2429" cy="27" r="1.6" fill="#e8e8e8" stroke="#6c6c6c" stroke-width="1"/>
<path d="M2451 17.6 V33.8 A9.4 3.2 0 0 0 2469.8 33.8 V17.6" fill="#e2e2e2" stroke="#6c6c6c" stroke-width="1.6"/><ellipse cx="2460.4" cy="17.6" rx="9.4" ry="3.2" fill="#e2e2e2" stroke="#6c6c6c" stroke-width="1.6"/><path d="M2451 23.0 A9.4 3.2 0 0 0 2469.8 23.0" fill="none" stroke="#6c6c6c" stroke-width="1.6"/><path d="M2451 28.4 A9.4 3.2 0 0 0 2469.8 28.4" fill="none" stroke="#6c6c6c" stroke-width="1.6"/>
<rect x="2418" y="43.8" width="22.6" height="15" rx="2" fill="#bff3ff" stroke="#2b8ea6" stroke-width="1.8"/><path d="M2418 56.4 H2440.6 V58.4 Q2440.6 60.4 2438.6 60.4 H2420 Q2418 60.4 2418 58.4 Z" fill="#fff" stroke="#6c6c6c" stroke-width="1.2"/><path d="M2429.2 60.6 V64.6 M2421.6 65.4 H2437" stroke="#9a9a9a" stroke-width="2.4"/>
<path d="M2446 44.4 V66 L2469.2 55.2 Z" fill="#72e77a" stroke="#3a9a44" stroke-width="1.8" stroke-linejoin="round"/>
<rect x="2506" y="15" width="21" height="21" rx="2" fill="#72e77a" stroke="#3a9a44" stroke-width="1.6"/>
<rect x="2527" y="15" width="21.6" height="21" rx="2" fill="#fff060" stroke="#8a7c1c" stroke-width="1.6"/>
<rect x="2527" y="36" width="21.6" height="21" rx="2" fill="#5fe0ff" stroke="#2b8ea6" stroke-width="1.6"/>
<rect x="2503" y="36" width="24" height="21" rx="5" fill="#ff5c5c" stroke="#9a2a2a" stroke-width="1.6"/>
<circle cx="2527" cy="25" r="4.4" fill="#fff060" stroke="#8a7c1c" stroke-width="1.4"/><circle cx="2516.6" cy="37" r="4.4" fill="#72e77a" stroke="#3a9a44" stroke-width="1.4"/><circle cx="2538" cy="17" r="3.6" fill="#151a26"/>
<path d="M2523.4 60.8 L2541.4 43.4" stroke="#4d6a70" stroke-width="6.4" stroke-linecap="round"/><path d="M2523.4 60.8 L2541.4 43.4" stroke="#dfe6e8" stroke-width="3.6" stroke-linecap="round"/>
<circle cx="2523.4" cy="60.8" r="4.6" fill="#dfe6e8" stroke="#4d6a70" stroke-width="1.6"/><circle cx="2523.4" cy="60.8" r="1.6" fill="#151a26"/>
<path d="M2552.4 37 A7.6 7.6 0 1 0 2551.4 48 L2546 45 A2.8 2.8 0 0 1 2546.6 39.6 Z" fill="#dfe6e8" stroke="#4d6a70" stroke-width="1.6" stroke-linejoin="round"/>
<g transform="translate(46.6,97.4) scale(1.0) translate(-46.6,-97.4)"><path d="M77.4 141 L84.2 143.6 C86 148 87.4 154 89.6 160 L97 162 C94.6 157 93.3 152 93.3 147.6 L93.3 138 Z" fill="#e2e2e2" stroke="#6c6c6c" stroke-width="2.00" stroke-linejoin="round"/><path d="M61.6 97.4 C57 97.4 54 99.5 52.3 101.8 C48.5 105 46.6 108 46.6 111.7 C46.6 116 48 120 49.8 123.5 C51.5 127.5 53.5 130.5 56.2 132.3 C59 132.6 62 131.2 64.1 128.9 C63.9 131 64 132.5 64.6 133.8 C65.5 136 67.5 137.8 69.5 138.7 C72 140 75 141 77.4 141.7 C82 142.8 88 143 93.3 141.2 L93.3 111.7 C93.3 108 91.5 106 89.2 104.3 C86 101.5 82 99.9 78.3 99.9 C75 99.9 72 100.5 69.5 101.8 C67.5 99 65 97.4 61.6 97.4 Z" fill="#e2e2e2" stroke="#6c6c6c" stroke-width="2.00" stroke-linejoin="round"/><path d="M79.3 127.4 C85 131 93 134 101 134.8 C99.5 137.5 97 139 94.1 139.2 C87 139.5 80 137.5 75.4 134.3 Z" fill="#fff"/><path d="M79.3 127.4 C85 131 93 134 101 134.8 C99.5 137.5 97 139 94.1 139.2 C87 139.5 80 137.5 75.4 134.3" fill="none" stroke="#6c6c6c" stroke-width="1.80" stroke-linecap="round" stroke-linejoin="round"/><path d="M54.7 110.7 C57 107.6 59.4 106 61.6 105.6 C64 105.4 65.6 106.2 65.6 107.7 C64.6 110 64.4 112 64.6 114.1 C64.8 116 65.2 117.6 65.6 119" fill="none" stroke="#6c6c6c" stroke-width="1.80" stroke-linecap="round"/><circle cx="79.3" cy="116.8" r="2" fill="#6c6c6c"/></g>
<rect x="47.4" y="145.2" width="16.6" height="16.6" rx="3" fill="#5fe0ff" stroke="#2b8ea6" stroke-width="1.8"/>
<rect x="71.2" y="145.2" width="16.6" height="16.6" rx="3" fill="#d878f4" stroke="#8a3aa8" stroke-width="1.8"/>
<rect x="95" y="145.2" width="16.6" height="16.6" rx="3" fill="#72e77a" stroke="#3a9a44" stroke-width="1.8"/>
<path d="M50 225 H109 Q111.6 225 111.6 227.6 V275 L97 289.8 H50 Q47.2 289.8 47.2 287 V227.6 Q47.2 225 50 225 Z" fill="#fff" stroke="#6c6c6c" stroke-width="2" stroke-linejoin="round"/>
<path d="M48.2 238.6 H60.6 V288.8 H50 Q48.2 288.8 48.2 287 Z" fill="#e2e2e2"/><path d="M60.6 226 H110.6 V238.6 H60.6 Z" fill="#e2e2e2"/><rect x="48.2" y="226" width="12.4" height="12.6" fill="#7c7c7c"/>
<path d="M60.6 226 V289 M48 238.6 H111" stroke="#6c6c6c" stroke-width="1.8" fill="none"/>
<path d="M69.6 231 V238 M80.8 233 V238 M92 233 V238 M103.2 231 V238 M53 247.6 H60 M55 258.8 H60 M55 270 H60 M53 281 H60" stroke="#6c6c6c" stroke-width="1.8"/>
<rect x="66.6" y="245" width="17.2" height="16.8" rx="2" fill="#5fe0ff" stroke="#2b8ea6" stroke-width="1.8"/><circle cx="97.6" cy="253.6" r="8.8" fill="#72e77a" stroke="#3a9a44" stroke-width="1.8"/>
<path d="M75.4 265.6 L83.4 274.6 L75.4 284 L67.4 274.6 Z" fill="#ff5c5c" stroke="#9a2a2a" stroke-width="1.8" stroke-linejoin="round"/>
<path d="M86.4 283.6 L95.4 267.4 Q97 266 98.4 267.8 L92.6 282.6 Z" fill="#fff060" stroke="#8a7c1c" stroke-width="1.8" stroke-linejoin="round"/>
<path d="M97 289.8 V279 Q97 275 101 275 H111.6 Z" fill="#e2e2e2" stroke="#6c6c6c" stroke-width="1.8" stroke-linejoin="round"/>
<path d="M48.8 361.4 V404.6 A26.9 8.4 0 0 0 102.6 404.6 V361.4" fill="#e2e2e2" stroke="#6c6c6c" stroke-width="2"/><ellipse cx="75.7" cy="361.4" rx="26.9" ry="8.4" fill="#e2e2e2" stroke="#6c6c6c" stroke-width="2"/><path d="M48.8 375.8 A26.9 8.4 0 0 0 102.6 375.8" fill="none" stroke="#6c6c6c" stroke-width="2"/><path d="M48.8 390.2 A26.9 8.4 0 0 0 102.6 390.2" fill="none" stroke="#6c6c6c" stroke-width="2"/>
<g transform="translate(75.7,383.7) scale(0.532) translate(-46.3,-863)"><path d="M64 881 L95 912" stroke="#4d6a70" stroke-width="13.4" stroke-linecap="butt"/><g transform="translate(58.4,875.4) rotate(-120)"><circle r="10.4" fill="#dfe6e8" stroke="#4d6a70" stroke-width="3.2"/><path d="M13 -4.3 H2.6 Q-1.6 -4.3 -1.6 0 Q-1.6 4.3 2.6 4.3 H13 Z" fill="#e2e2e2"/><path d="M9.6 -4.3 H2.6 Q-1.6 -4.3 -1.6 0 Q-1.6 4.3 2.6 4.3 H9.6" fill="none" stroke="#4d6a70" stroke-width="3.2"/></g><g transform="translate(100.2,917.4) rotate(60)"><circle r="10.4" fill="#dfe6e8" stroke="#4d6a70" stroke-width="3.2"/><path d="M13 -4.3 H2.6 Q-1.6 -4.3 -1.6 0 Q-1.6 4.3 2.6 4.3 H13 Z" fill="#151a26"/><path d="M9.6 -4.3 H2.6 Q-1.6 -4.3 -1.6 0 Q-1.6 4.3 2.6 4.3 H9.6" fill="none" stroke="#4d6a70" stroke-width="3.2"/></g><path d="M64 881 L95 912" stroke="#dfe6e8" stroke-width="7.6"/><path d="M103 871.4 L70 904" stroke="#4d6a70" stroke-width="4.8"/><path d="M100.4 871.6 L107.4 864.6 Q109.6 862.8 111.4 865 L112 867.4 L104.6 875.6 Z" fill="#dfe6e8" stroke="#4d6a70" stroke-width="2.9" stroke-linejoin="round"/><path d="M70.4 906.6 L53 923.6" stroke="#9a2a2a" stroke-width="13.9" stroke-linecap="round"/><path d="M70.4 906.6 L53 923.6" stroke="#ff5c5c" stroke-width="7.8" stroke-linecap="round"/><path d="M64.2 900 L76 912" stroke="#9a2a2a" stroke-width="4.4" stroke-linecap="round"/></g>
<path d="M47 485.6 V509.0 A15.0 4.6 0 0 0 77 509.0 V485.6" fill="#e2e2e2" stroke="#6c6c6c" stroke-width="2"/><ellipse cx="62.0" cy="485.6" rx="15.0" ry="4.6" fill="#e2e2e2" stroke="#6c6c6c" stroke-width="2"/><path d="M47 493.4 A15.0 4.6 0 0 0 77 493.4" fill="none" stroke="#6c6c6c" stroke-width="2"/><path d="M47 501.2 A15.0 4.6 0 0 0 77 501.2" fill="none" stroke="#6c6c6c" stroke-width="2"/>
<path d="M81.6 484 H97.0 Q102.6 484 102.6 489.6 V500.4 H109.19999999999999 L99.0 511.6 L88.8 500.4 H95.19999999999999 V491.4 H81.6 Z" fill="#5cdcff" stroke="#2b8ea6" stroke-width="1.8" stroke-linejoin="round"/>
<rect x="76.2" y="514.8" width="35.6" height="31.4" rx="3.2" fill="#ffffff" stroke="#6c6c6c" stroke-width="2"/><rect x="84.9" y="528.2" width="12.0" height="11.7" rx="2.3" fill="#62e2ff"/><path d="M84.9 536.9 Q84.9 539.9 87.4 539.9 H94.6 Q96.8 539.9 96.8 536.9 V530.9 Q96.8 528.2 94.6 528.2" fill="none" stroke="#2b7e92" stroke-width="1.5" stroke-linecap="round"/><path d="M96.8 539.9 V527.5 L98.6 522.8 Q99.7 521.1 101.0 523.0 L107.8 536.9 Q108.5 539.9 106.2 539.9 Z" fill="#76e87e"/><path d="M98.4 523.0 Q99.7 521.1 101.0 523.0 L107.8 536.9 Q108.5 539.9 106.2 539.9 H100.8" fill="none" stroke="#3a9a44" stroke-width="1.5" stroke-linecap="round"/><circle cx="85.7" cy="527.4" r="5.6" fill="#ff5c5c" stroke="#8e2626" stroke-width="1.5"/>
<rect x="47.2" y="608.2" width="35.6" height="31.4" rx="3.2" fill="#ffffff" stroke="#6c6c6c" stroke-width="2"/><rect x="55.9" y="621.6" width="12.0" height="11.7" rx="2.3" fill="#62e2ff"/><path d="M55.9 630.3 Q55.9 633.3 58.4 633.3 H65.6 Q67.8 633.3 67.8 630.3 V624.3 Q67.8 621.6 65.6 621.6" fill="none" stroke="#2b7e92" stroke-width="1.5" stroke-linecap="round"/><path d="M67.8 633.3 V620.9 L69.6 616.2 Q70.7 614.5 72.0 616.4 L78.8 630.3 Q79.5 633.3 77.2 633.3 Z" fill="#76e87e"/><path d="M69.4 616.4 Q70.7 614.5 72.0 616.4 L78.8 630.3 Q79.5 633.3 77.2 633.3 H71.8" fill="none" stroke="#3a9a44" stroke-width="1.5" stroke-linecap="round"/><circle cx="56.7" cy="620.8" r="5.6" fill="#ff5c5c" stroke="#8e2626" stroke-width="1.5"/>
<path d="M86.6 610.4 H102.0 Q107.6 610.4 107.6 616.0 V626.8 H114.19999999999999 L104.0 638.0 L93.8 626.8 H100.19999999999999 V617.8 H86.6 Z" fill="#72e77a" stroke="#3a9a44" stroke-width="1.8" stroke-linejoin="round"/>
<path d="M82.4 645.1 V668.1 A14.8 4.5 0 0 0 112.0 668.1 V645.1" fill="#e2e2e2" stroke="#6c6c6c" stroke-width="2"/><ellipse cx="97.2" cy="645.1" rx="14.8" ry="4.5" fill="#e2e2e2" stroke="#6c6c6c" stroke-width="2"/><path d="M82.4 652.8 A14.8 4.5 0 0 0 112.0 652.8" fill="none" stroke="#6c6c6c" stroke-width="2"/><path d="M82.4 660.4 A14.8 4.5 0 0 0 112.0 660.4" fill="none" stroke="#6c6c6c" stroke-width="2"/>
<rect x="47.2" y="736" width="35.6" height="31.4" rx="3.2" fill="#ffffff" stroke="#6c6c6c" stroke-width="2"/><rect x="55.9" y="749.4" width="12.0" height="11.7" rx="2.3" fill="#62e2ff"/><path d="M55.9 758.1 Q55.9 761.1 58.4 761.1 H65.6 Q67.8 761.1 67.8 758.1 V752.1 Q67.8 749.4 65.6 749.4" fill="none" stroke="#2b7e92" stroke-width="1.5" stroke-linecap="round"/><path d="M67.8 761.1 V748.7 L69.6 744.0 Q70.7 742.3 72.0 744.2 L78.8 758.1 Q79.5 761.1 77.2 761.1 Z" fill="#76e87e"/><path d="M69.4 744.2 Q70.7 742.3 72.0 744.2 L78.8 758.1 Q79.5 761.1 77.2 761.1 H71.8" fill="none" stroke="#3a9a44" stroke-width="1.5" stroke-linecap="round"/><circle cx="56.7" cy="748.6" r="5.6" fill="#ff5c5c" stroke="#8e2626" stroke-width="1.5"/>
<path d="M86.6 738 H102.0 Q107.6 738 107.6 743.6 V754.4 H114.19999999999999 L104.0 765.6 L93.8 754.4 H100.19999999999999 V745.4 H86.6 Z" fill="#72e77a" stroke="#3a9a44" stroke-width="1.8" stroke-linejoin="round"/>
<path d="M82.4 772.5 V795.9 A14.8 4.5 0 0 0 112.0 795.9 V772.5" fill="#e2e2e2" stroke="#6c6c6c" stroke-width="2"/><ellipse cx="97.2" cy="772.5" rx="14.8" ry="4.5" fill="#e2e2e2" stroke="#6c6c6c" stroke-width="2"/><path d="M82.4 780.3 A14.8 4.5 0 0 0 112.0 780.3" fill="none" stroke="#6c6c6c" stroke-width="2"/><path d="M82.4 788.1 A14.8 4.5 0 0 0 112.0 788.1" fill="none" stroke="#6c6c6c" stroke-width="2"/>
<path d="M47.4 772.6 H55 V787.6 H66.6 V781.6 L76 791.2 L66.6 801 V795 H47.4 Z" fill="#ff5c5c" stroke="#9a2a2a" stroke-width="1.8" stroke-linejoin="round"/>
<path d="M64 881 L95 912" stroke="#4d6a70" stroke-width="11.0" stroke-linecap="butt"/><g transform="translate(58.4,875.4) rotate(-120)"><circle r="10.4" fill="#dfe6e8" stroke="#4d6a70" stroke-width="1.9"/><path d="M13 -4.3 H2.6 Q-1.6 -4.3 -1.6 0 Q-1.6 4.3 2.6 4.3 H13 Z" fill="#151a26"/><path d="M9.6 -4.3 H2.6 Q-1.6 -4.3 -1.6 0 Q-1.6 4.3 2.6 4.3 H9.6" fill="none" stroke="#4d6a70" stroke-width="1.9"/></g><g transform="translate(100.2,917.4) rotate(60)"><circle r="10.4" fill="#dfe6e8" stroke="#4d6a70" stroke-width="1.9"/><path d="M13 -4.3 H2.6 Q-1.6 -4.3 -1.6 0 Q-1.6 4.3 2.6 4.3 H13 Z" fill="#151a26"/><path d="M9.6 -4.3 H2.6 Q-1.6 -4.3 -1.6 0 Q-1.6 4.3 2.6 4.3 H9.6" fill="none" stroke="#4d6a70" stroke-width="1.9"/></g><path d="M64 881 L95 912" stroke="#dfe6e8" stroke-width="7.6"/><path d="M103 871.4 L70 904" stroke="#4d6a70" stroke-width="2.8"/><path d="M100.4 871.6 L107.4 864.6 Q109.6 862.8 111.4 865 L112 867.4 L104.6 875.6 Z" fill="#dfe6e8" stroke="#4d6a70" stroke-width="1.7" stroke-linejoin="round"/><path d="M70.4 906.6 L53 923.6" stroke="#9a2a2a" stroke-width="11.4" stroke-linecap="round"/><path d="M70.4 906.6 L53 923.6" stroke="#ff5c5c" stroke-width="7.8" stroke-linecap="round"/><path d="M64.2 900 L76 912" stroke="#9a2a2a" stroke-width="2.6" stroke-linecap="round"/>
<rect x="47.4" y="992.2" width="64.2" height="64.2" rx="3.5" fill="#e4e4e4" stroke="#6c6c6c" stroke-width="2.2"/>
<path d="M61.4 1000 V1032" stroke="#5a5a5a" stroke-width="2"/><rect x="55.4" y="1014.4" width="12" height="6.4" rx="3.2" fill="#fff060" stroke="#8a7c1c" stroke-width="1.6"/>
<path d="M79.6 1000 V1032" stroke="#5a5a5a" stroke-width="2"/><rect x="73.6" y="1006.0" width="12" height="6.4" rx="3.2" fill="#fff060" stroke="#8a7c1c" stroke-width="1.6"/>
<path d="M97.8 1000 V1032" stroke="#5a5a5a" stroke-width="2"/><rect x="91.8" y="1020.0" width="12" height="6.4" rx="3.2" fill="#fff060" stroke="#8a7c1c" stroke-width="1.6"/>
<circle cx="61.4" cy="1044" r="4.6" fill="#ff5c5c" stroke="#9a2a2a" stroke-width="1.8"/>
<circle cx="79.6" cy="1044" r="4.6" fill="#72e77a" stroke="#3a9a44" stroke-width="1.8"/>
<circle cx="97.8" cy="1044" r="4.6" fill="#ff5c5c" stroke="#9a2a2a" stroke-width="1.8"/>
<path d="M0 1110.6 H157" stroke="#2c3246" stroke-width="1.4"/>
<rect x="46" y="1132" width="55.2" height="55" rx="4" fill="#e4e4e4"/>
<rect x="50" y="1136.4" width="20.4" height="20.4" rx="2" fill="#5fe0ff" stroke="#2b8ea6" stroke-width="2"/><circle cx="86.6" cy="1146.4" r="10.2" fill="#72e77a" stroke="#3a9a44" stroke-width="2"/>
<path d="M60.4 1160.6 L69.4 1171.6 L60.4 1182.6 L51.4 1171.6 Z" fill="#ff5c5c" stroke="#9a2a2a" stroke-width="2" stroke-linejoin="round"/>
<path d="M73.4 1181.6 L83.6 1163.6 Q85.6 1162 87 1164 L79.6 1182 Z" fill="#fff060" stroke="#8a7c1c" stroke-width="2" stroke-linejoin="round"/>
<circle cx="96.4" cy="1182.7" r="15.2" fill="#72e77a" stroke="#3a9a44" stroke-width="2.2"/><path d="M88.4 1182.7 H104.4 M96.4 1174.7 V1190.7" stroke="#3a9a44" stroke-width="2.4"/>
<path d="M139 1172 V1188.8 L149.4 1180.4 Z" fill="#dcdde4"/>
<path d="M72.8 1269.7 L73.9 1261.3 Q79.4 1258.3 84.9 1261.3 L86.0 1269.7 A24.6 24.6 0 0 1 91.5 1272.0 L91.5 1272.0 L98.2 1266.8 Q104.2 1268.6 106.0 1274.6 L100.8 1281.3 A24.6 24.6 0 0 1 103.1 1286.8 L103.1 1286.8 L111.5 1287.9 Q114.5 1293.4 111.5 1298.9 L103.1 1300.0 A24.6 24.6 0 0 1 100.8 1305.5 L100.8 1305.5 L106.0 1312.2 Q104.2 1318.2 98.2 1320.0 L91.5 1314.8 A24.6 24.6 0 0 1 86.0 1317.1 L86.0 1317.1 L84.9 1325.5 Q79.4 1328.5 73.9 1325.5 L72.8 1317.1 A24.6 24.6 0 0 1 67.3 1314.8 L67.3 1314.8 L60.6 1320.0 Q54.6 1318.2 52.8 1312.2 L58.0 1305.5 A24.6 24.6 0 0 1 55.7 1300.0 L55.7 1300.0 L47.3 1298.9 Q44.3 1293.4 47.3 1287.9 L55.7 1286.8 A24.6 24.6 0 0 1 58.0 1281.3 L58.0 1281.3 L52.8 1274.6 Q54.6 1268.6 60.6 1266.8 L67.3 1272.0 A24.6 24.6 0 0 1 72.8 1269.7 Z M92.0 1293.4 A12.6 12.6 0 1 0 66.80000000000001 1293.4 A12.6 12.6 0 1 0 92.0 1293.4 Z" fill="#dfe6e8" stroke="#4d6a70" stroke-width="2.2" stroke-linejoin="round" fill-rule="evenodd"/>
<path d="M100.6 1281 L80.6 1306 L94 1306 L91.4 1326 L111.6 1299 L98 1300 Z" fill="#fff060" stroke="#8a7c1c" stroke-width="2" stroke-linejoin="round"/>
<path d="M139 1300.2 V1317 L149.4 1308.6 Z" fill="#dcdde4"/>
<rect x="47.4" y="1389.6" width="47.6" height="50" rx="3" fill="#fff" stroke="#6c6c6c" stroke-width="2.2"/><path d="M62 1400.6 H83 M56.4 1409 H83 M56.4 1417.4 H83 M56.4 1425.8 H76" stroke="#6c6c6c" stroke-width="2"/>
<g transform="translate(78.4,1453.4) rotate(-44)"><path d="M0 0 L11 -5.6 V5.6 Z" fill="#dcdcdc" stroke="#6c6c6c" stroke-width="1.8" stroke-linejoin="round"/><rect x="11" y="-5.6" width="24" height="11.2" fill="#fff060" stroke="#8a7c1c" stroke-width="1.8"/><path d="M35 -5.6 H40 A5.6 5.6 0 0 1 40 5.6 H35 Z" fill="#ff5c5c" stroke="#9a2a2a" stroke-width="1.8"/></g>
<path d="M61.6 1564 V1526 Q61.6 1517.4 70 1517.4 H104 Q111.6 1517.4 111.6 1525.4 H97.6 V1572 Q97.6 1581.6 88 1581.6 H56 Q47.2 1581.6 47.2 1573 Q47.2 1564.6 56 1564.6 Z" fill="#fff" stroke="#6c6c6c" stroke-width="2.2" stroke-linejoin="round"/>
<path d="M97.6 1525.4 Q97.6 1518 104 1517.6 M56 1564.6 H90 Q81.6 1565 81.6 1573 Q81.6 1581.4 88 1581.6" fill="none" stroke="#6c6c6c" stroke-width="2.2"/>
<path d="M69 1531.6 H87.6 M69 1540 H87.6 M69 1548.4 H87.6 M69 1556.8 H87.6" stroke="#6c6c6c" stroke-width="2"/>
<rect x="165.4" y="1663.7" width="198.5" height="57.9" rx="6" fill="#394059" stroke="#454d6a" stroke-width="1.4"/>
<rect x="373.4" y="1663.7" width="156.2" height="57.9" rx="6" fill="#394059" stroke="#454d6a" stroke-width="1.4"/>
<rect x="539.4" y="1663.7" width="155.4" height="57.9" rx="6" fill="#394059" stroke="#454d6a" stroke-width="1.4"/>
<rect x="704.3" y="1663.7" width="203.5" height="57.9" rx="6" fill="#394059" stroke="#454d6a" stroke-width="1.4"/>
<rect x="1010.8" y="1663.7" width="413.4" height="57.9" rx="6" fill="#394059" stroke="#454d6a" stroke-width="1.4"/>
<rect x="1434" y="1663.7" width="326.4" height="57.9" rx="6" fill="#394059" stroke="#454d6a" stroke-width="1.4"/>
<rect x="2055.2" y="1663.7" width="165.2" height="57.9" rx="6" fill="#394059" stroke="#454d6a" stroke-width="1.4"/>
<rect x="2230.2" y="1663.7" width="210.8" height="57.9" rx="6" fill="#394059" stroke="#454d6a" stroke-width="1.4"/>
<rect x="2450.4" y="1663.7" width="204.0" height="57.9" rx="6" fill="#394059" stroke="#454d6a" stroke-width="1.4"/>
<rect x="1770.4" y="1664.2" width="130.4" height="56.8" rx="6" fill="#4b7493" stroke="#4cdcf6" stroke-width="2"/>
<path d="M1270.2 1673 V1711 M1596.8 1673 V1711" stroke="#4a5270" stroke-width="1.4"/>
<rect x="176.4" y="1673" width="31.6" height="27.6" rx="3" fill="#fff" stroke="#d8d8d8" stroke-width="1.4"/><rect x="183.8" y="1684.4" width="11.1" height="12.2" rx="2.1" fill="#62e2ff"/><path d="M183.8 1693.5 Q183.8 1696.6 186.1 1696.6 H192.7 Q194.8 1696.6 194.8 1693.5 V1687.2 Q194.8 1684.4 192.7 1684.4" fill="none" stroke="#2b7e92" stroke-width="1.5" stroke-linecap="round"/><path d="M194.8 1696.6 V1683.7 L196.4 1678.8 Q197.5 1677.0 198.7 1679.0 L205.0 1693.5 Q205.7 1696.6 203.6 1696.6 Z" fill="#76e87e"/><path d="M196.3 1679.0 Q197.5 1677.0 198.7 1679.0 L205.0 1693.5 Q205.7 1696.6 203.6 1696.6 H198.5" fill="none" stroke="#3a9a44" stroke-width="1.5" stroke-linecap="round"/><circle cx="184.5" cy="1683.5" r="5.1" fill="#ff5c5c" stroke="#8e2626" stroke-width="1.5"/>
<path d="M187.6 1700.6 L194 1694.6 L198 1698.4 L210.6 1685.6 L215.6 1691.6 L198 1712 Z" fill="#72e77a" stroke="#3a9a44" stroke-width="1.6" stroke-linejoin="round"/>
<rect x="384.4" y="1673" width="31.6" height="27.6" rx="3" fill="#fff" stroke="#d8d8d8" stroke-width="1.4"/><rect x="391.8" y="1684.4" width="11.1" height="12.2" rx="2.1" fill="#62e2ff"/><path d="M391.8 1693.5 Q391.8 1696.6 394.1 1696.6 H400.7 Q402.8 1696.6 402.8 1693.5 V1687.2 Q402.8 1684.4 400.7 1684.4" fill="none" stroke="#2b7e92" stroke-width="1.5" stroke-linecap="round"/><path d="M402.8 1696.6 V1683.7 L404.4 1678.8 Q405.5 1677.0 406.7 1679.0 L413.0 1693.5 Q413.7 1696.6 411.6 1696.6 Z" fill="#76e87e"/><path d="M404.3 1679.0 Q405.5 1677.0 406.7 1679.0 L413.0 1693.5 Q413.7 1696.6 411.6 1696.6 H406.5" fill="none" stroke="#3a9a44" stroke-width="1.5" stroke-linecap="round"/><circle cx="392.5" cy="1683.5" r="5.1" fill="#ff5c5c" stroke="#8e2626" stroke-width="1.5"/>
<path d="M412 1703 L424 1714" stroke="#2f7f8e" stroke-width="2" stroke-linecap="round"/><circle cx="406" cy="1696.6" r="11" fill="#c8f4ff" stroke="#2f7f8e" stroke-width="2"/>
<path d="M571.6 1699 L551.4 1706.8 L571.6 1714.6 L591.6 1706.8 Z" fill="#fff060" stroke="#8a7c1c" stroke-width="1.6" stroke-linejoin="round"/>
<path d="M571.6 1686.4 L551.4 1694.2 L571.6 1702 L591.6 1694.2 Z" fill="#5fe0ff" stroke="#2b8ea6" stroke-width="1.6" stroke-linejoin="round"/>
<path d="M571.6 1673.6 L551.4 1681.6 L571.6 1689.4 L591.6 1681.6 Z" fill="#ff5c5c" stroke="#9a2a2a" stroke-width="1.6" stroke-linejoin="round"/>
<path d="M722 1674 H742 L751.6 1683.6 V1710 H722 Z" fill="#fff" stroke="#d8d8d8" stroke-width="1.4" stroke-linejoin="round"/>
<path d="M715.4 1678.6 H730 L735.6 1684 L730 1689.6 H715.4 Z" fill="#72e77a" stroke="#3a9a44" stroke-width="1.6" stroke-linejoin="round"/><path d="M719 1684 H727 M723 1680.4 V1687.6" stroke="#3a9a44" stroke-width="1.6"/>
<path d="M715.4 1695.4 H730 L735.6 1701 L730 1706.6 H715.4 Z" fill="#ff5c5c" stroke="#9a2a2a" stroke-width="1.6" stroke-linejoin="round"/><path d="M719 1701 H727" stroke="#9a2a2a" stroke-width="1.6"/>
<circle cx="747" cy="1703.4" r="8.6" fill="#5fe0ff" stroke="#2b8ea6" stroke-width="1.8"/><path d="M747 1698.6 V1704 H751" fill="none" stroke="#2b8ea6" stroke-width="1.6"/>
<path d="M1022 1674.6 L1034.6 1680 L1029 1682.6 L1027 1688.4 Z" fill="#fff" stroke="#5a5a5a" stroke-width="1.2" stroke-linejoin="round"/>
<path d="M1038 1687.6 L1043 1681.1999999999998 L1048 1687.6 Z" fill="#5fe0ff" stroke="#2b8ea6" stroke-width="1.2" transform="rotate(0 1043 1684.6)"/>
<path d="M1051 1699.6 L1056 1693.1999999999998 L1061 1699.6 Z" fill="#5fe0ff" stroke="#2b8ea6" stroke-width="1.2" transform="rotate(90 1056 1696.6)"/>
<path d="M1038 1711.6 L1043 1705.1999999999998 L1048 1711.6 Z" fill="#5fe0ff" stroke="#2b8ea6" stroke-width="1.2" transform="rotate(180 1043 1708.6)"/>
<path d="M1025 1699.6 L1030 1693.1999999999998 L1035 1699.6 Z" fill="#5fe0ff" stroke="#2b8ea6" stroke-width="1.2" transform="rotate(270 1030 1696.6)"/>
<path d="M1314 1701 L1326 1712" stroke="#2f7f8e" stroke-width="2" stroke-linecap="round"/><circle cx="1303.2" cy="1689" r="12.2" fill="#c8f4ff" stroke="#2f7f8e" stroke-width="2"/>
<path d="M1451.4 1679.6 L1476 1707 M1476 1679.6 L1451.4 1707" stroke="#9a2a2a" stroke-width="10.4" stroke-linecap="round"/><path d="M1451.4 1679.6 L1476 1707 M1476 1679.6 L1451.4 1707" stroke="#ff5c5c" stroke-width="7.4" stroke-linecap="round"/>
<rect x="1616.4" y="1674" width="36.6" height="36.6" rx="3" fill="#dcdcdc" stroke="#8a8a8a" stroke-width="1.2" stroke-dasharray="3 2"/>
<rect x="1620.0" y="1677.6" width="12.2" height="12.2" rx="1.5" fill="#5fe0ff" stroke="#2b8ea6" stroke-width="1.6"/><circle cx="1642.7" cy="1683.7" r="6.3" fill="#72e77a" stroke="#3a9a44" stroke-width="1.6"/><path d="M1626.1 1693.5 L1631.6 1700.6 L1626.1 1707.3 L1620.6 1700.6 Z" fill="#ff5c5c" stroke="#9a2a2a" stroke-width="1.6" stroke-linejoin="round"/><path d="M1635.6 1706.7 L1642.7 1694.7 L1649.7 1706.7 Z" fill="#fff060" stroke="#8a7c1c" stroke-width="1.6" stroke-linejoin="round"/>
<rect x="1781" y="1674" width="30.6" height="27.2" rx="3" fill="#fff" stroke="#8a8a8a" stroke-width="1.2"/><rect x="1788.1" y="1684.7" width="10.5" height="11.5" rx="2.0" fill="#62e2ff"/><path d="M1788.1 1693.2 Q1788.1 1696.2 1790.3 1696.2 H1796.6 Q1798.6 1696.2 1798.6 1693.2 V1687.3 Q1798.6 1684.7 1796.6 1684.7" fill="none" stroke="#2b7e92" stroke-width="1.5" stroke-linecap="round"/><path d="M1798.6 1696.2 V1683.9 L1800.1 1679.3 Q1801.1 1677.6 1802.2 1679.5 L1808.2 1693.2 Q1808.8 1696.2 1806.8 1696.2 Z" fill="#76e87e"/><path d="M1800.0 1679.5 Q1801.1 1677.6 1802.2 1679.5 L1808.2 1693.2 Q1808.8 1696.2 1806.8 1696.2 H1802.1" fill="none" stroke="#3a9a44" stroke-width="1.5" stroke-linecap="round"/><circle cx="1788.8" cy="1683.8" r="4.9" fill="#ff5c5c" stroke="#8e2626" stroke-width="1.5"/>
<g transform="translate(1805.4,1699.8) rotate(45)"><rect x="-9.5" y="-9.5" width="9.5" height="7" fill="#5fe0ff"/><rect x="0" y="-9.5" width="9.5" height="5" fill="#5a9cf8"/><rect x="0" y="-4.5" width="9.5" height="7" fill="#ffe85a"/><rect x="3" y="2.5" width="6.5" height="7" fill="#72e77a"/><rect x="-9.5" y="-2.5" width="6" height="6" fill="#ff5c5c"/><rect x="-6" y="3.5" width="9" height="6" fill="#ffb84a"/><rect x="-9.5" y="3.5" width="3.5" height="6" fill="#5a9cf8"/><path d="M-9.5 9.5 H9.5" stroke="#54d860" stroke-width="2"/></g>
<path d="M1796.6 1696.4 C1796.6 1691 1800.6 1688.6 1805 1688.6 C1810 1688.6 1812.6 1692 1812.6 1697 C1812.6 1701 1810.6 1703.6 1808.6 1705.6 C1808 1708 1807 1710 1805.6 1710 C1803.6 1710 1803.4 1707 1804 1704.6 C1800 1704.6 1796.6 1701.6 1796.6 1696.4 Z" fill="#e6e6e6" stroke="#cfcfcf" stroke-width=".8"/><circle cx="1808" cy="1697" r=".9" fill="#8a8a8a"/>
<rect x="2069.3" y="1675.4" width="14.4" height="15.0" rx="1.5" fill="#5fe0ff" stroke="#2b8ea6" stroke-width="1.6"/><circle cx="2096.0" cy="1682.9" r="7.4" fill="#72e77a" stroke="#3a9a44" stroke-width="1.6"/><path d="M2076.5 1694.9 L2083.0 1703.6 L2076.5 1711.8 L2070.0 1703.6 Z" fill="#ff5c5c" stroke="#9a2a2a" stroke-width="1.6" stroke-linejoin="round"/><path d="M2087.7 1711.1 L2096.0 1696.4 L2104.2 1711.1 Z" fill="#fff060" stroke="#8a7c1c" stroke-width="1.6" stroke-linejoin="round"/>
<rect x="2241.4" y="1672.6" width="31.6" height="26.6" rx="3" fill="#fff" stroke="#d8d8d8" stroke-width="1.4"/><rect x="2248.8" y="1683.6" width="11.1" height="12.2" rx="2.1" fill="#62e2ff"/><path d="M2248.8 1692.7 Q2248.8 1695.8 2251.1 1695.8 H2257.7 Q2259.8 1695.8 2259.8 1692.7 V1686.4 Q2259.8 1683.6 2257.7 1683.6" fill="none" stroke="#2b7e92" stroke-width="1.5" stroke-linecap="round"/><path d="M2259.8 1695.8 V1682.9 L2261.4 1678.0 Q2262.5 1676.2 2263.7 1678.2 L2270.0 1692.7 Q2270.7 1695.8 2268.6 1695.8 Z" fill="#76e87e"/><path d="M2261.3 1678.2 Q2262.5 1676.2 2263.7 1678.2 L2270.0 1692.7 Q2270.7 1695.8 2268.6 1695.8 H2263.5" fill="none" stroke="#3a9a44" stroke-width="1.5" stroke-linecap="round"/><circle cx="2249.5" cy="1682.7" r="5.1" fill="#ff5c5c" stroke="#8e2626" stroke-width="1.5"/>
<path d="M2279.2 1691.1 L2281.9 1691.3 L2281.9 1693.9 L2279.2 1694.1 L2278.6 1695.5 L2278.6 1695.5 L2280.4 1697.5 L2278.5 1699.4 L2276.5 1697.6 L2275.1 1698.2 L2275.1 1698.2 L2274.9 1700.9 L2272.3 1700.9 L2272.1 1698.2 L2270.7 1697.6 L2270.7 1697.6 L2268.7 1699.4 L2266.8 1697.5 L2268.6 1695.5 L2268.0 1694.1 L2268.0 1694.1 L2265.3 1693.9 L2265.3 1691.3 L2268.0 1691.1 L2268.6 1689.7 L2268.6 1689.7 L2266.8 1687.7 L2268.7 1685.8 L2270.7 1687.6 L2272.1 1687.0 L2272.1 1687.0 L2272.3 1684.3 L2274.9 1684.3 L2275.1 1687.0 L2276.5 1687.6 L2276.5 1687.6 L2278.5 1685.8 L2280.4 1687.7 L2278.6 1689.7 L2279.2 1691.1 Z M2276.4 1692.6 A2.8 2.8 0 1 0 2270.7999999999997 1692.6 A2.8 2.8 0 1 0 2276.4 1692.6 Z" fill="#e8eced" stroke="#4d6a70" stroke-width="1.3" fill-rule="evenodd" stroke-linejoin="round"/>
<path d="M2263.2 1704.3 L2265.7 1704.4 L2265.7 1706.8 L2263.2 1706.9 L2262.7 1708.1 L2262.7 1708.1 L2264.4 1709.9 L2262.7 1711.6 L2260.9 1709.9 L2259.7 1710.4 L2259.7 1710.4 L2259.6 1712.9 L2257.2 1712.9 L2257.1 1710.4 L2255.9 1709.9 L2255.9 1709.9 L2254.1 1711.6 L2252.4 1709.9 L2254.1 1708.1 L2253.6 1706.9 L2253.6 1706.9 L2251.1 1706.8 L2251.1 1704.4 L2253.6 1704.3 L2254.1 1703.1 L2254.1 1703.1 L2252.4 1701.3 L2254.1 1699.6 L2255.9 1701.3 L2257.1 1700.8 L2257.1 1700.8 L2257.2 1698.3 L2259.6 1698.3 L2259.7 1700.8 L2260.9 1701.3 L2260.9 1701.3 L2262.7 1699.6 L2264.4 1701.3 L2262.7 1703.1 L2263.2 1704.3 Z M2261.0 1705.6 A2.6 2.6 0 1 0 2255.8 1705.6 A2.6 2.6 0 1 0 2261.0 1705.6 Z" fill="#e8eced" stroke="#4d6a70" stroke-width="1.3" fill-rule="evenodd" stroke-linejoin="round"/>
<path d="M2467 1693.4 H2496 M2474 1693.4 Q2476 1680.6 2488.6 1680.6 M2474 1693.4 Q2476 1704 2486 1704" fill="none" stroke="#e8e8e8" stroke-width="1.8"/>
<circle cx="2466.4" cy="1693.4" r="4.2" fill="#72e77a" stroke="#3a9a44" stroke-width="1.2"/><circle cx="2492.6" cy="1680.6" r="4.2" fill="#fff060" stroke="#8a7c1c" stroke-width="1.2"/><circle cx="2497.4" cy="1693.6" r="4.2" fill="#5fe0ff" stroke="#2b8ea6" stroke-width="1.2"/><circle cx="2488" cy="1704.6" r="4.2" fill="#ff5c5c" stroke="#9a2a2a" stroke-width="1.2"/>
</svg>
<div class="lb" style="left:27.3px;top:169.5px;font-size:24.2px;letter-spacing:0.71px;color:#e8e9f0">Welcome</div>
<div class="lb" style="left:41.3px;top:297.4px;font-size:24.2px;letter-spacing:0.26px;color:#e8e9f0">Design</div>
<div class="lb" style="left:34.6px;top:424.5px;font-size:24.2px;letter-spacing:0.56px;color:#e8e9f0">Manage</div>
<div class="lb" style="left:41.8px;top:552.7px;font-size:24.2px;letter-spacing:1.51px;color:#e8e9f0">Import</div>
<div class="lb" style="left:41.8px;top:679.9px;font-size:24.2px;letter-spacing:1.16px;color:#e8e9f0">Export</div>
<div class="lb" style="left:59.3px;top:808.2px;font-size:24.2px;letter-spacing:1.89px;color:#e8e9f0">Diff</div>
<div class="lb" style="left:63.2px;top:934.9px;font-size:24.2px;letter-spacing:0.54px;color:#e8e9f0">Fix</div>
<div class="lb" style="left:25.3px;top:1062.9px;font-size:24.2px;letter-spacing:0.47px;color:#e8e9f0">Configure</div>
<div class="lb" style="left:53.9px;top:1205.5px;font-size:24.2px;letter-spacing:1.77px;color:#e8e9f0">New</div>
<div class="lb" style="left:48.5px;top:1333.4px;font-size:24.2px;letter-spacing:0.22px;color:#e8e9f0">Quick</div>
<div class="lb" style="left:21.1px;top:1460.5px;font-size:24.2px;letter-spacing:0.75px;color:#e8e9f0">Properties</div>
<div class="lb" style="left:40.8px;top:1588.7px;font-size:24.2px;letter-spacing:0.09px;color:#e8e9f0">Source</div>
<div class="lb" style="left:218.8px;top:1678.6px;font-size:27.4px;letter-spacing:1.50px;color:#e8e9f0"><u>V</u>alidation</div>
<div class="lb" style="left:427.5px;top:1678.6px;font-size:27.4px;letter-spacing:0.37px;color:#e8e9f0">Sea<u>r</u>ch</div>
<div class="lb" style="left:594.0px;top:1678.6px;font-size:27.4px;letter-spacing:0.91px;color:#e8e9f0"><u>L</u>ayers</div>
<div class="lb" style="left:758.5px;top:1678.6px;font-size:27.4px;letter-spacing:0.43px;color:#e8e9f0">C<u>h</u>angelog</div>
<div class="lb" style="left:1066.8px;top:1678.6px;font-size:27.4px;letter-spacing:-0.20px;color:#e8e9f0">2578, 1580</div>
<div class="lb" style="left:1334.2px;top:1678.6px;font-size:27.4px;letter-spacing:0.96px;color:#e8e9f0">55%</div>
<div class="lb" style="left:1490.4px;top:1678.6px;font-size:27.4px;letter-spacing:0.89px;color:#e8e9f0">None</div>
<div class="lb" style="left:1662.0px;top:1678.6px;font-size:27.4px;letter-spacing:0.92px;color:#e8e9f0">None</div>
<div class="lb" style="left:1827.7px;top:1678.6px;font-size:27.4px;letter-spacing:1.38px;color:#e8e9f0">.dbm</div>
<div class="lb" style="left:2109.4px;top:1678.6px;font-size:27.4px;letter-spacing:0.75px;color:#e8e9f0">O<u>b</u>jects</div>
<div class="lb" style="left:2285.0px;top:1678.6px;font-size:27.4px;letter-spacing:0.92px;color:#e8e9f0"><u>O</u>perations</div>
<div class="lb" style="left:2504.9px;top:1678.6px;font-size:27.4px;letter-spacing:0.99px;color:#e8e9f0">Versioning</div>
<div class="lb" style="left:1922.5px;top:24.1px;font-size:29.4px;letter-spacing:0.77px;color:#e8e9f0">northwind</div>
</body></html>
